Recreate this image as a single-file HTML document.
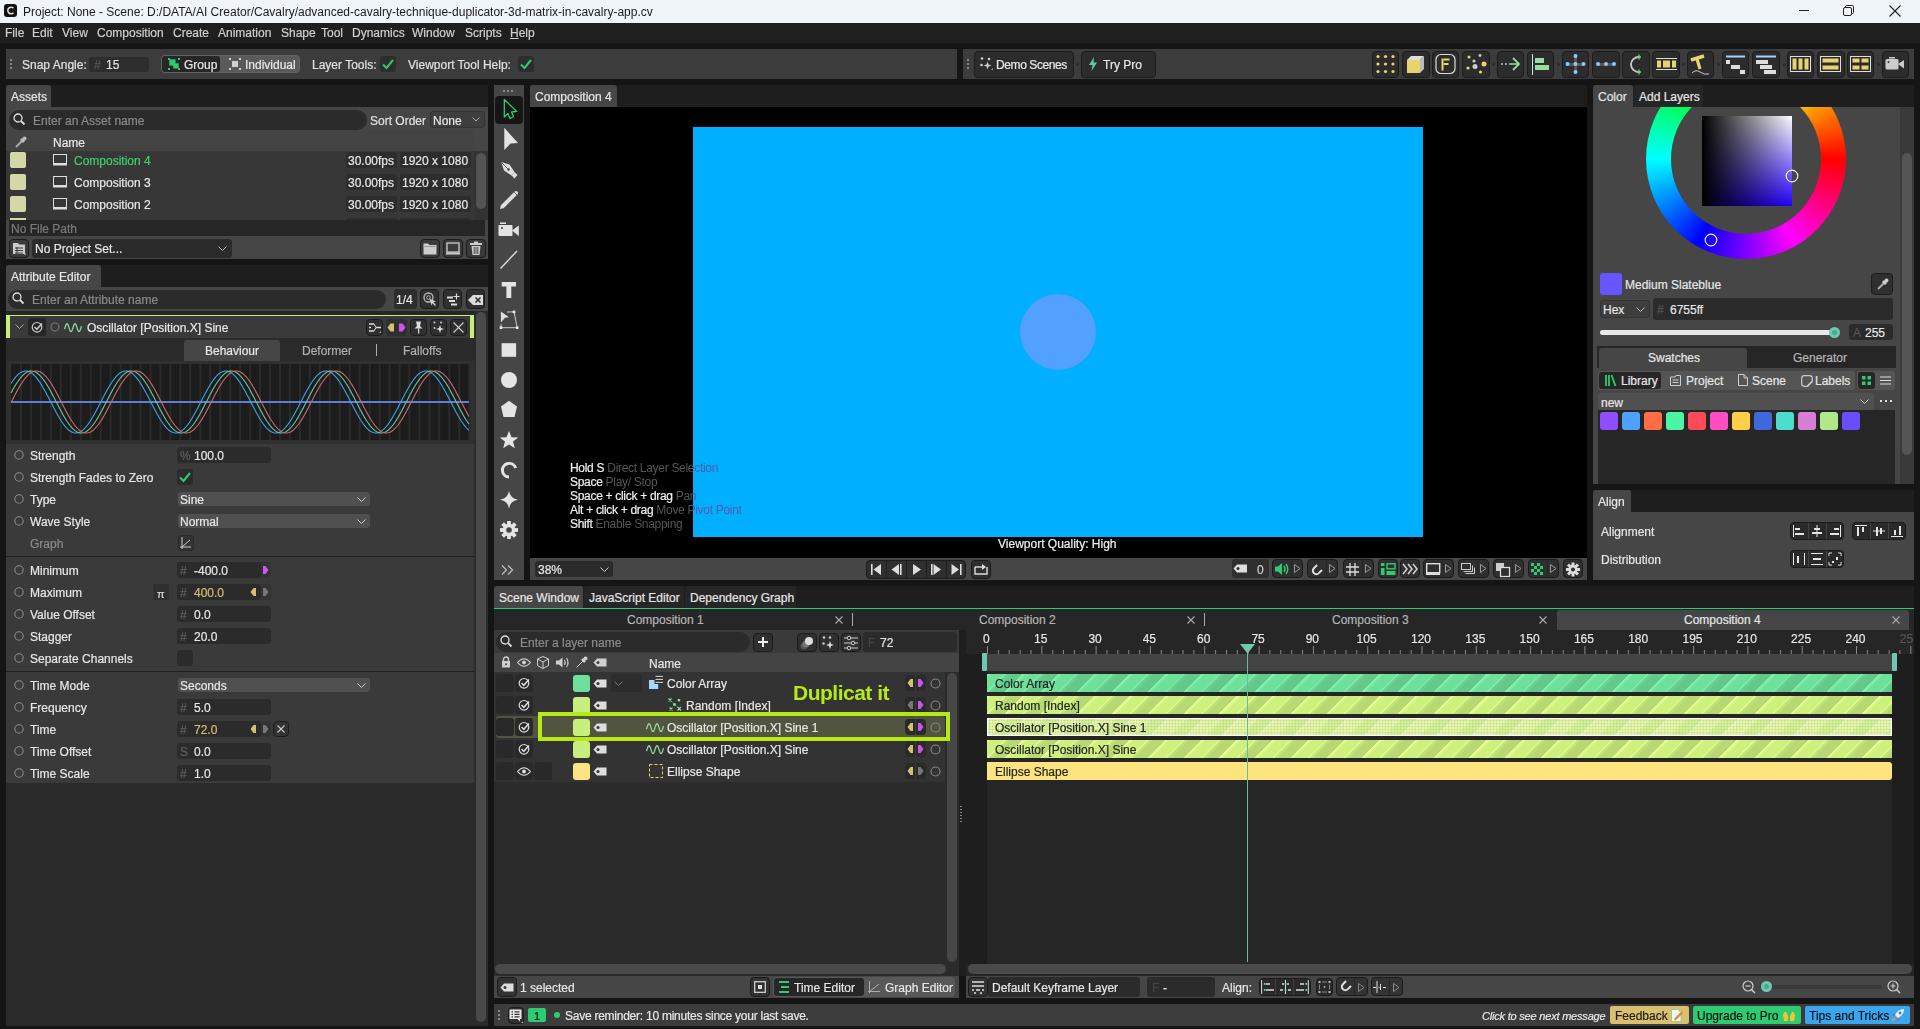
<!DOCTYPE html>
<html><head><meta charset="utf-8">
<style>
*{box-sizing:border-box;margin:0;padding:0}
html,body{width:1920px;height:1029px;overflow:hidden;background:#151515;font-family:"Liberation Sans",sans-serif;font-size:12px;color:#dcdcdc}
.a{position:absolute}
.t{position:absolute;white-space:nowrap;line-height:16px;margin-top:1px;-webkit-text-stroke:0.2px currentColor}
.tab{position:absolute;background:#464646;border-radius:3px 3px 0 0}
.fld{position:absolute;background:#2b2b2b;border-radius:3px}
.btn{position:absolute;background:#2c2c2c;border:1px solid #1c1c1c;border-radius:4px}
svg{position:absolute;overflow:visible}
</style></head><body>
<!-- title bar -->
<div class="a" style="left:0;top:0;width:1920px;height:23px;background:#eff4f9"></div>
<div class="a" style="left:4px;top:4px;width:13px;height:13px;background:#111;border-radius:3px"></div>
<svg style="left:4px;top:4px" width="13" height="13"><path d="M9.5 4.2 A3.3 3.3 0 1 0 9.5 8.8" stroke="#ddd" stroke-width="1.6" fill="none"/></svg>
<div class="t" style="left:23px;top:3px;color:#1b1b1b;-webkit-text-stroke:0">Project: None - Scene: D:/DATA/AI Creator/Cavalry/advanced-cavalry-technique-duplicator-3d-matrix-in-cavalry-app.cv</div>
<div class="a" style="left:1799px;top:10px;width:10px;height:1px;background:#222"></div>
<svg style="left:1843px;top:5px" width="12" height="12"><rect x="0.5" y="2.5" width="8" height="8" rx="1.5" fill="none" stroke="#222"/><path d="M2.5 2.5 V1.8 Q2.5 0.5 3.8 0.5 H9.5 Q10.5 0.5 10.5 1.5 V7.5 Q10.5 8.5 9.5 8.5 H8.5" fill="none" stroke="#222"/></svg>
<svg style="left:1889px;top:5px" width="12" height="12"><path d="M0.5 0.5 L11.5 11.5 M11.5 0.5 L0.5 11.5" stroke="#222" stroke-width="1.1"/></svg>
<!-- menu bar -->
<div class="a" style="left:0;top:23px;width:1920px;height:20px;background:#1f1f1f"></div>
<div class="t" style="left:5px;top:24px;color:#cfcfcf">File</div>
<div class="t" style="left:32px;top:24px;color:#cfcfcf">Edit</div>
<div class="t" style="left:62px;top:24px;color:#cfcfcf">View</div>
<div class="t" style="left:97px;top:24px;color:#cfcfcf">Composition</div>
<div class="t" style="left:173px;top:24px;color:#cfcfcf">Create</div>
<div class="t" style="left:218px;top:24px;color:#cfcfcf">Animation</div>
<div class="t" style="left:281px;top:24px;color:#cfcfcf">Shape</div>
<div class="t" style="left:321px;top:24px;color:#cfcfcf">Tool</div>
<div class="t" style="left:352px;top:24px;color:#cfcfcf">Dynamics</div>
<div class="t" style="left:412px;top:24px;color:#cfcfcf">Window</div>
<div class="t" style="left:465px;top:24px;color:#cfcfcf">Scripts</div>
<div class="t" style="left:510px;top:24px;color:#cfcfcf"><u>H</u>elp</div>
<!-- toolbar 1 -->
<div class="a" style="left:6px;top:49px;width:951px;height:30px;background:#3c3c3c"></div>
<div class="a" style="left:10px;top:59px;width:2px;height:2px;background:#888;box-shadow:0 4px #888,0 8px #888"></div>
<div class="t" style="left:22px;top:56px;color:#e0e0e0">Snap Angle:</div>
<div class="fld" style="left:89px;top:57px;width:60px;height:15px;background:#2d2d2d"></div>
<div class="t" style="left:94px;top:56px;color:#555">#</div>
<div class="t" style="left:106px;top:56px;color:#e0e0e0">15</div>
<div class="a" style="left:161px;top:55px;width:139px;height:18px;background:#5a5a5a;border:1px solid #646464;border-radius:4px"></div>
<div class="a" style="left:162px;top:56px;width:58px;height:16px;background:#262626;border-radius:3px"></div>
<svg style="left:168px;top:58px" width="12" height="12"><g fill="#2ecc71"><rect x="0" y="0" width="2" height="2"/><rect x="10" y="0" width="2" height="2"/><rect x="0" y="10" width="2" height="2"/><rect x="10" y="10" width="2" height="2"/><rect x="1.3" y="1.3" width="6.2" height="6.3"/><rect x="5.2" y="5.3" width="5.5" height="5.2"/></g></svg>
<div class="t" style="left:184px;top:56px;color:#e8e8e8">Group</div>
<svg style="left:229px;top:58px" width="12" height="12"><g fill="#cfcfcf"><rect x="0" y="0" width="2" height="2"/><rect x="10" y="0" width="2" height="2"/><rect x="0" y="10" width="2" height="2"/><rect x="10" y="10" width="2" height="2"/><rect x="3" y="3" width="6" height="6"/></g></svg>
<div class="t" style="left:245px;top:56px;color:#e8e8e8">Individual</div>
<div class="t" style="left:312px;top:56px;color:#e0e0e0">Layer Tools:</div>
<div class="fld" style="left:380px;top:56px;width:16px;height:16px;background:#2d2d2d"></div>
<svg style="left:382px;top:59px" width="12" height="10"><path d="M1 5.5 L4.5 9 L11 1" stroke="#2ecc71" stroke-width="2" fill="none"/></svg>
<div class="t" style="left:408px;top:56px;color:#e0e0e0">Viewport Tool Help:</div>
<div class="fld" style="left:518px;top:56px;width:16px;height:16px;background:#2d2d2d"></div>
<svg style="left:520px;top:59px" width="12" height="10"><path d="M1 5.5 L4.5 9 L11 1" stroke="#2ecc71" stroke-width="2" fill="none"/></svg>
<!-- toolbar 2 -->
<div class="a" style="left:963px;top:49px;width:951px;height:30px;background:#3c3c3c"></div>
<div class="a" style="left:967px;top:59px;width:2px;height:2px;background:#888;box-shadow:0 4px #888,0 8px #888"></div>
<div class="btn" style="left:974px;top:51px;width:100px;height:27px"></div>
<svg style="left:980px;top:57px" width="14" height="14"><g fill="#ccc"><circle cx="2" cy="1.5" r="1.3"/><circle cx="9" cy="2" r="1.3"/><circle cx="1.5" cy="8" r="1.3"/><path d="M7.5 4.5 L8.5 7.5 L11.5 8.5 L8.5 9.5 L7.5 12.5 L6.5 9.5 L3.5 8.5 L6.5 7.5Z"/></g><path d="M11 13 L13 11 L13 13Z" fill="#5fc9a8"/></svg>
<div class="t" style="left:996px;top:56px;color:#e8e8e8;letter-spacing:-0.4px">Demo Scenes</div>
<div class="a" style="left:1076px;top:63px;width:3px;height:3px;border-radius:2px;background:#2a2a2a"></div>
<div class="btn" style="left:1081px;top:51px;width:75px;height:27px"></div>
<svg style="left:1088px;top:57px" width="10" height="14"><path d="M6 0 L1 8 L4.5 8 L3.5 14 L9 5.5 L5.5 5.5Z" fill="#5fc9a8"/></svg>
<div class="t" style="left:1103px;top:56px;color:#e8e8e8">Try Pro</div>
<div class="btn" style="left:1372px;top:51px;width:27px;height:27px"></div>
<svg style="left:1372px;top:51px" width="27" height="27"><g fill="#e6d56f"><circle cx="6" cy="5.5" r="1.6"/><circle cx="13.5" cy="5.5" r="1.6"/><circle cx="21" cy="5.5" r="1.6"/><circle cx="6" cy="13" r="1.6"/><circle cx="13.5" cy="13" r="1.6"/><circle cx="21" cy="13" r="1.6"/><circle cx="6" cy="20.5" r="1.6"/><circle cx="13.5" cy="20.5" r="1.6"/><circle cx="21" cy="20.5" r="1.6"/></g></svg>
<div class="btn" style="left:1402px;top:51px;width:28px;height:27px"></div>
<svg style="left:1402px;top:51px" width="28" height="27"><path d="M5 9 L9 5 L22 5 L18 9Z" fill="#ddd"/><path d="M18 9 L22 5 L22 18 L18 22Z" fill="#bbb"/><rect x="5" y="9" width="13" height="13" fill="#e6d56f"/></svg>
<div class="btn" style="left:1432px;top:51px;width:27px;height:27px"></div>
<svg style="left:1432px;top:51px" width="27" height="27"><rect x="4" y="3.5" width="19" height="19" rx="5" fill="none" stroke="#ddd" stroke-width="1.2"/><g fill="#e6d56f"><rect x="9.5" y="7.5" width="2" height="12"/><rect x="11.5" y="7.5" width="6" height="2"/><rect x="11.5" y="12" width="5" height="2"/></g></svg>
<div class="btn" style="left:1462px;top:51px;width:28px;height:27px"></div>
<svg style="left:1462px;top:51px" width="28" height="27"><circle cx="7" cy="6" r="1.5" fill="#e6d56f"/><circle cx="18" cy="4.5" r="1.4" fill="#ccc"/><circle cx="12" cy="10" r="1.6" fill="#ccc"/><circle cx="22" cy="13" r="2.5" fill="#e6d56f"/><circle cx="6" cy="17" r="1.6" fill="#e6d56f"/><circle cx="13" cy="15.5" r="2.5" fill="#ccc"/><circle cx="18.5" cy="21" r="1.6" fill="#e6d56f"/></svg>
<div class="a" style="left:1492px;top:63px;width:3px;height:3px;border-radius:2px;background:#2a2a2a"></div>
<div class="btn" style="left:1497px;top:51px;width:27px;height:27px"></div>
<svg style="left:1497px;top:51px" width="27" height="27"><path d="M4 13 H6 M8 13 H10 M12 13 H21" stroke="#8fdf98" stroke-width="1.6"/><path d="M16 7 L22 13 L16 19" stroke="#8fdf98" stroke-width="1.8" fill="none"/></svg>
<div class="btn" style="left:1527px;top:51px;width:27px;height:27px"></div>
<svg style="left:1527px;top:51px" width="27" height="27"><rect x="5" y="3" width="1" height="21" fill="#ddd"/><rect x="8" y="7" width="9" height="5" fill="#9adc9f"/><rect x="8" y="14" width="14" height="5" fill="#9adc9f"/></svg>
<div class="a" style="left:1557px;top:63px;width:3px;height:3px;border-radius:2px;background:#2a2a2a"></div>
<div class="btn" style="left:1562px;top:51px;width:27px;height:27px"></div>
<svg style="left:1562px;top:51px" width="27" height="27"><rect x="6" y="12" width="15" height="3" fill="#555"/><rect x="12" y="5" width="3" height="17" fill="#555"/><g fill="#8cc8ff"><circle cx="13.5" cy="5" r="2"/><circle cx="13.5" cy="13" r="2"/><circle cx="13.5" cy="21" r="2"/><circle cx="5.5" cy="13" r="2"/><circle cx="21.5" cy="13" r="2"/></g></svg>
<div class="btn" style="left:1592px;top:51px;width:28px;height:27px"></div>
<svg style="left:1592px;top:51px" width="28" height="27"><rect x="6" y="12" width="16" height="3" fill="#555"/><g fill="#8cc8ff"><circle cx="6" cy="13" r="2"/><circle cx="14" cy="13" r="2"/><circle cx="22" cy="13" r="2"/></g></svg>
<div class="btn" style="left:1622px;top:51px;width:28px;height:27px"></div>
<svg style="left:1622px;top:51px" width="28" height="27"><path d="M17 6 A8 7.5 0 0 0 17 21" stroke="#ccc" stroke-width="1.8" fill="none"/><path d="M14.5 6 H19 M17 3.5 V8.5 M14.5 21 H19 M17 18.5 V23.5" stroke="#7fcf8a" stroke-width="1.3"/></svg>
<div class="btn" style="left:1652px;top:51px;width:28px;height:27px"></div>
<svg style="left:1652px;top:51px" width="28" height="27"><rect x="4" y="7" width="21" height="1" fill="#ddd"/><rect x="4" y="18" width="21" height="1" fill="#ddd"/><g fill="#e6d56f"><rect x="5" y="9.5" width="4" height="7"/><rect x="11" y="9.5" width="7" height="7"/><rect x="20" y="9.5" width="4" height="7"/></g></svg>
<div class="a" style="left:1682px;top:63px;width:3px;height:3px;border-radius:2px;background:#2a2a2a"></div>
<div class="btn" style="left:1687px;top:51px;width:27px;height:27px"></div>
<svg style="left:1687px;top:51px" width="27" height="27"><path d="M4 9 L17 5" stroke="#e6d56f" stroke-width="3.5"/><path d="M10 8 L13 18" stroke="#e6d56f" stroke-width="3.2"/><path d="M5 22 Q9 18 13 21 T22 23" stroke="#ccc" stroke-width="1" fill="none"/></svg>
<div class="a" style="left:1717px;top:63px;width:3px;height:3px;border-radius:2px;background:#2a2a2a"></div>
<div class="btn" style="left:1722px;top:51px;width:27px;height:27px"></div>
<svg style="left:1722px;top:51px" width="27" height="27"><rect x="4" y="4.5" width="19" height="2" fill="#9fd6ff"/><g fill="#ddd"><rect x="4" y="9" width="4" height="4"/><rect x="9" y="14" width="9" height="4"/><rect x="18" y="19" width="5" height="4"/></g></svg>
<div class="btn" style="left:1752px;top:51px;width:28px;height:27px"></div>
<svg style="left:1752px;top:51px" width="28" height="27"><rect x="4" y="4.5" width="20" height="2" fill="#9fd6ff"/><g fill="#ddd"><rect x="4" y="9" width="12" height="4"/><rect x="8" y="14" width="12" height="4"/><rect x="12" y="19" width="12" height="4"/></g></svg>
<div class="a" style="left:1783px;top:63px;width:3px;height:3px;border-radius:2px;background:#2a2a2a"></div>
<div class="btn" style="left:1787px;top:51px;width:27px;height:27px"></div>
<svg style="left:1787px;top:51px" width="27" height="27"><rect x="3.5" y="5.5" width="20" height="15" fill="none" stroke="#ddd"/><g fill="#e6d56f"><rect x="5.5" y="7.5" width="4" height="11"/><rect x="11.5" y="7.5" width="4" height="11"/><rect x="17.5" y="7.5" width="4" height="11"/></g></svg>
<div class="btn" style="left:1817px;top:51px;width:28px;height:27px"></div>
<svg style="left:1817px;top:51px" width="28" height="27"><rect x="3.5" y="5.5" width="20" height="15" fill="none" stroke="#ddd"/><g fill="#e6d56f"><rect x="5.5" y="7.5" width="16" height="4"/><rect x="5.5" y="14.5" width="16" height="4"/></g></svg>
<div class="btn" style="left:1847px;top:51px;width:27px;height:27px"></div>
<svg style="left:1847px;top:51px" width="27" height="27"><rect x="3.5" y="5.5" width="20" height="15" fill="none" stroke="#ddd"/><g fill="#e6d56f"><rect x="5.5" y="7.5" width="7" height="4"/><rect x="14.5" y="7.5" width="7" height="4"/><rect x="5.5" y="14.5" width="7" height="4"/><rect x="14.5" y="14.5" width="7" height="4"/></g></svg>
<div class="a" style="left:1877px;top:63px;width:3px;height:3px;border-radius:2px;background:#2a2a2a"></div>
<div class="btn" style="left:1882px;top:51px;width:27px;height:27px"></div>
<svg style="left:1882px;top:51px" width="27" height="27"><rect x="7" y="6" width="6" height="1.5" fill="#ccc"/><rect x="3.5" y="8" width="13" height="10.5" rx="1.5" fill="#ccc"/><path d="M16 13 L22 9 L22 17.5Z" fill="#ccc"/><circle cx="6.5" cy="11" r="1" fill="#333"/></svg>
<!-- assets panel -->
<div class="a" style="left:6px;top:85px;width:482px;height:22px;background:#1e1e1e"></div>
<div class="tab" style="left:6px;top:85px;width:45px;height:22px"></div>
<div class="t" style="left:11px;top:88px;color:#e6e6e6">Assets</div>
<div class="a" style="left:6px;top:107px;width:482px;height:152px;background:#464646"></div>
<div class="fld" style="left:9px;top:110px;width:358px;height:20px;border-radius:10px;background:#2b2b2b"></div>
<svg style="left:13px;top:113px" width="13" height="13"><circle cx="5" cy="5" r="4" stroke="#ddd" stroke-width="1.3" fill="none"/><path d="M8 8 L11.5 11.5" stroke="#ddd" stroke-width="1.8"/></svg>
<div class="t" style="left:33px;top:112px;color:#8a8a8a">Enter an Asset name</div>
<div class="t" style="left:370px;top:112px;color:#e0e0e0">Sort Order</div>
<div class="a" style="left:430px;top:111px;width:55px;height:17px;background:#3e3e3e;border:1px solid #333;border-radius:3px"></div>
<div class="t" style="left:433px;top:112px;color:#e6e6e6">None</div>
<svg style="left:472px;top:117px" width="8" height="5"><path d="M0.5 0.5 L4 4 L7.5 0.5" stroke="#aaa" fill="none"/></svg>
<div class="a" style="left:6px;top:130px;width:468px;height:21px;background:#444"></div>
<svg style="left:14px;top:136px" width="13" height="13"><path d="M2 11 L8 5" stroke="#aaa" stroke-width="2"/><path d="M7 3 L10 6" stroke="#bbb" stroke-width="3"/><circle cx="10.5" cy="2.5" r="2" fill="#bbb"/></svg>
<div class="t" style="left:53px;top:134px;color:#e6e6e6">Name</div>
<div class="a" style="left:6px;top:151px;width:468px;height:69px;background:#373737"></div>
<div class="a" style="left:474px;top:151px;width:14px;height:69px;background:#333"></div>
<div class="a" style="left:476px;top:153px;width:10px;height:56px;background:#545454;border-radius:5px"></div>
<!-- rows -->
<div class="a" style="left:10px;top:152px;width:16px;height:16px;background:#d3d8a6;border-radius:2px"></div>
<div class="a" style="left:10px;top:174px;width:16px;height:16px;background:#d3d8a6;border-radius:2px"></div>
<div class="a" style="left:10px;top:196px;width:16px;height:16px;background:#d3d8a6;border-radius:2px"></div>
<div class="a" style="left:10px;top:218px;width:16px;height:2px;background:#d3d8a6"></div>
<svg style="left:53px;top:154px" width="14" height="12"><rect x="0.5" y="0.5" width="13" height="9" fill="none" stroke="#ddd"/><rect x="0" y="9.5" width="14" height="2" fill="#ddd"/></svg>
<svg style="left:53px;top:176px" width="14" height="12"><rect x="0.5" y="0.5" width="13" height="9" fill="none" stroke="#ddd"/><rect x="0" y="9.5" width="14" height="2" fill="#ddd"/></svg>
<svg style="left:53px;top:198px" width="14" height="12"><rect x="0.5" y="0.5" width="13" height="9" fill="none" stroke="#ddd"/><rect x="0" y="9.5" width="14" height="2" fill="#ddd"/></svg>
<div class="t" style="left:74px;top:152px;color:#3dd26e">Composition 4</div>
<div class="t" style="left:74px;top:174px;color:#e6e6e6">Composition 3</div>
<div class="t" style="left:74px;top:196px;color:#e6e6e6">Composition 2</div>
<div class="fld" style="left:346px;top:152px;width:51px;height:16px;background:#2d2d2d"></div>
<div class="fld" style="left:400px;top:152px;width:71px;height:16px;background:#2d2d2d"></div>
<div class="fld" style="left:346px;top:174px;width:51px;height:16px;background:#2d2d2d"></div>
<div class="fld" style="left:400px;top:174px;width:71px;height:16px;background:#2d2d2d"></div>
<div class="fld" style="left:346px;top:196px;width:51px;height:16px;background:#2d2d2d"></div>
<div class="fld" style="left:400px;top:196px;width:71px;height:16px;background:#2d2d2d"></div>
<div class="fld" style="left:346px;top:218px;width:51px;height:2px;background:#2d2d2d"></div>
<div class="fld" style="left:400px;top:218px;width:71px;height:2px;background:#2d2d2d"></div>
<div class="t" style="left:348px;top:152px;color:#e6e6e6">30.00fps</div>
<div class="t" style="left:402px;top:152px;color:#e6e6e6">1920 x 1080</div>
<div class="t" style="left:348px;top:174px;color:#e6e6e6">30.00fps</div>
<div class="t" style="left:402px;top:174px;color:#e6e6e6">1920 x 1080</div>
<div class="t" style="left:348px;top:196px;color:#e6e6e6">30.00fps</div>
<div class="t" style="left:402px;top:196px;color:#e6e6e6">1920 x 1080</div>
<div class="a" style="left:9px;top:220px;width:476px;height:16px;background:#262626"></div>
<div class="t" style="left:11px;top:220px;color:#7a7a7a">No File Path</div>
<div class="btn" style="left:9px;top:239px;width:20px;height:19px;background:#3a3a3a"></div>
<svg style="left:12px;top:242px" width="14" height="13"><path d="M1 1 H6 L7 2.5 H13 V12 H1Z" fill="#ccc"/><g stroke="#3a3a3a" stroke-width="1"><path d="M3 6 H11 M3 8.5 H11 M3 11 H11 M5 5 V12"/></g><path d="M12 13 L14 11 V13Z" fill="#5fc9a8"/></svg>
<div class="fld" style="left:32px;top:239px;width:200px;height:19px;background:#2b2b2b"></div>
<div class="t" style="left:35px;top:240px;color:#e6e6e6">No Project Set...</div>
<svg style="left:218px;top:246px" width="9" height="5"><path d="M0.5 0.5 L4.5 4.5 L8.5 0.5" stroke="#bbb" fill="none"/></svg>
<div class="btn" style="left:420px;top:239px;width:20px;height:19px;background:#3a3a3a"></div>
<svg style="left:423px;top:242px" width="14" height="13"><path d="M0.5 1.5 H5 L6.5 3 H13.5 V12.5 H0.5Z" fill="#ccc"/><path d="M0.5 4.5 H13.5" stroke="#999"/></svg>
<div class="btn" style="left:443px;top:239px;width:20px;height:19px;background:#3a3a3a"></div>
<svg style="left:446px;top:242px" width="14" height="13"><rect x="1" y="1" width="12" height="9" fill="none" stroke="#ccc" stroke-width="1.3"/><rect x="0" y="10.5" width="14" height="2" fill="#ccc"/></svg>
<div class="btn" style="left:466px;top:239px;width:20px;height:19px;background:#3a3a3a"></div>
<svg style="left:469px;top:241px" width="14" height="15"><rect x="1" y="2" width="12" height="2" fill="#ccc"/><rect x="5" y="0.5" width="4" height="2" fill="#ccc"/><path d="M2.5 5 H11.5 L10.5 14 H3.5Z" fill="#ccc"/><path d="M5.2 6 V13 M7 6 V13 M8.8 6 V13" stroke="#3a3a3a" stroke-width="0.9"/></svg>
<div class="a" style="left:6px;top:265px;width:482px;height:22px;background:#1e1e1e"></div>
<div class="tab" style="left:6px;top:265px;width:95px;height:22px"></div>
<div class="t" style="left:11px;top:268px;color:#e6e6e6">Attribute Editor</div>
<div class="a" style="left:6px;top:287px;width:482px;height:739px;background:#2b2b2b"></div>
<div class="a" style="left:6px;top:287px;width:482px;height:25px;background:#464646"></div>
<div class="fld" style="left:8px;top:290px;width:378px;height:19px;border-radius:10px;background:#2b2b2b"></div>
<svg style="left:12px;top:292px" width="13" height="13"><circle cx="5" cy="5" r="4" stroke="#ddd" stroke-width="1.3" fill="none"/><path d="M8 8 L11.5 11.5" stroke="#ddd" stroke-width="1.8"/></svg>
<div class="t" style="left:32px;top:291px;color:#8a8a8a">Enter an Attribute name</div>
<div class="fld" style="left:394px;top:289px;width:23px;height:20px;background:#2d2d2d"></div>
<div class="t" style="left:396px;top:291px;color:#e6e6e6">1/4</div>
<div class="btn" style="left:420px;top:289px;width:19px;height:20px;background:#2f2f2f"></div>
<div class="btn" style="left:443px;top:289px;width:19px;height:20px;background:#2f2f2f"></div>
<div class="btn" style="left:466px;top:289px;width:19px;height:20px;background:#2f2f2f"></div>
<svg style="left:423px;top:292px" width="14" height="14"><circle cx="5.5" cy="5.5" r="4.5" stroke="#bbb" stroke-width="1.3" fill="none"/><circle cx="5.5" cy="5.5" r="1.8" stroke="#bbb" stroke-width="1" fill="none"/><path d="M6.5 6.5 L13 9.5 L10.5 10.3 L13 13 L12 14 L9.5 11.3 L8.5 13.5Z" fill="#ccc"/></svg>
<svg style="left:446px;top:293px" width="14" height="14"><path d="M1 4.5 H7 M3 8 H9 M5 11.5 H11" stroke="#ddd" stroke-width="2"/><path d="M10.5 0.5 V6.5 M7.5 3.5 H13.5" stroke="#ddd" stroke-width="1.2"/></svg>
<svg style="left:468px;top:294px" width="16" height="12"><path d="M5 1 H15 V11 H5 L0 6Z" fill="#ddd"/><path d="M7.5 3.5 L12.5 8.5 M12.5 3.5 L7.5 8.5" stroke="#2f2f2f" stroke-width="1.6"/></svg>
<div class="a" style="left:6px;top:311px;width:482px;height:4px;background:#262626"></div>
<div class="a" style="left:6px;top:315px;width:468px;height:23px;background:#3a3a3a"></div>
<div class="a" style="left:6px;top:315px;width:468px;height:1px;background:#c5ef79"></div>
<div class="a" style="left:6px;top:315px;width:4px;height:23px;background:#c5ef79"></div>
<div class="a" style="left:470px;top:315px;width:4px;height:23px;background:#c5ef79"></div>
<svg style="left:15px;top:324px" width="9" height="5"><path d="M0.5 0.5 L4.5 4.5 L8.5 0.5" stroke="#aaa" fill="none"/></svg>
<div class="fld" style="left:28px;top:318px;width:18px;height:18px;background:#262626"></div>
<svg style="left:31px;top:321px" width="12" height="12"><circle cx="6" cy="6.3" r="4.8" stroke="#ccc" stroke-width="1.2" fill="none"/><path d="M3.5 6 L5.8 8.3 L11 2.5" stroke="#ccc" stroke-width="1.5" fill="none"/></svg>
<svg style="left:50px;top:322px" width="10" height="10"><circle cx="5" cy="5" r="4" stroke="#777" stroke-width="1.1" fill="none"/></svg>
<svg style="left:64px;top:322px" width="18" height="12"><polyline points="0.50,7.16 0.75,6.42 1.00,5.65 1.25,4.88 1.50,4.14 1.75,3.46 2.00,2.86 2.25,2.37 2.50,2.00 2.75,1.78 3.00,1.70 3.25,1.78 3.50,2.00 3.75,2.37 4.00,2.86 4.25,3.46 4.50,4.14 4.75,4.88 5.00,5.65 5.25,6.42 5.50,7.16 5.75,7.84 6.00,8.44 6.25,8.93 6.50,9.30 6.75,9.52 7.00,9.60 7.25,9.52 7.50,9.30 7.75,8.93 8.00,8.44 8.25,7.84 8.50,7.16 8.75,6.42 9.00,5.65 9.25,4.88 9.50,4.14 9.75,3.46 10.00,2.86 10.25,2.37 10.50,2.00 10.75,1.78 11.00,1.70 11.25,1.78 11.50,2.00 11.75,2.37 12.00,2.86 12.25,3.46 12.50,4.14 12.75,4.88 13.00,5.65 13.25,6.42 13.50,7.16 13.75,7.84 14.00,8.44 14.25,8.93 14.50,9.30 14.75,9.52 15.00,9.60 15.25,9.52 15.50,9.30 15.75,8.93 16.00,8.44 16.25,7.84 16.50,7.16 16.75,6.42 17.00,5.65 17.25,4.88 17.50,4.14" stroke="#8fd89a" stroke-width="1.3" fill="none"/></svg>
<div class="t" style="left:87px;top:319px;color:#e6e6e6">Oscillator [Position.X] Sine</div>
<div class="btn" style="left:366px;top:319px;width:17px;height:17px;background:#2f2f2f"></div>
<div class="btn" style="left:410px;top:319px;width:17px;height:17px;background:#2f2f2f"></div>
<div class="btn" style="left:430px;top:319px;width:17px;height:17px;background:#2f2f2f"></div>
<div class="btn" style="left:450px;top:319px;width:17px;height:17px;background:#2f2f2f"></div>
<div class="fld" style="left:386px;top:319px;width:21px;height:17px;background:#2f2f2f"></div>
<svg style="left:369px;top:322px" width="12" height="11"><path d="M0 2 H5 M0 5.5 H2 M7 5.5 H12 M0 9 H5" stroke="#ddd" stroke-width="1.5"/><path d="M5 2 L7 5.5 L5 9" stroke="#ddd" fill="none"/><path d="M10 11 L12 9 V11Z" fill="#5fc9a8"/></svg>
<svg style="left:387px;top:323px" width="20" height="9"><path d="M7 0.5 V8.5 H3.5 L0.5 4.5 L3.5 0.5Z" fill="#d4bf72"/><path d="M12 0.5 V8.5 H15.5 L18.5 4.5 L15.5 0.5Z" fill="#d055ee"/></svg>
<svg style="left:413px;top:321px" width="11" height="13"><path d="M3 0.5 H8 L7 5 L9.5 7.5 H1.5 L4 5Z" fill="#ddd"/><rect x="5" y="7.5" width="1.2" height="5" fill="#ddd"/></svg>
<svg style="left:433px;top:321px" width="12" height="12"><g fill="#ccc"><circle cx="1.5" cy="1.5" r="1"/><circle cx="8" cy="1.5" r="1"/><circle cx="1.5" cy="7" r="1"/></g><path d="M7 4 L8 7 L11 8 L8 9 L7 12 L6 9 L3 8 L6 7Z" fill="#ddd"/></svg>
<svg style="left:453px;top:322px" width="11" height="11"><path d="M0.5 0.5 L10.5 10.5 M10.5 0.5 L0.5 10.5" stroke="#ccc" stroke-width="1.1"/></svg>
<div class="a" style="left:6px;top:338px;width:468px;height:23px;background:#2a2a2a"></div>
<div class="tab" style="left:184px;top:340px;width:96px;height:21px"></div>
<div class="t" style="left:205px;top:342px;color:#e6e6e6">Behaviour</div>
<div class="t" style="left:302px;top:342px;color:#b0b0b0">Deformer</div>
<div class="a" style="left:376px;top:344px;width:1px;height:12px;background:#aaa"></div>
<div class="t" style="left:403px;top:342px;color:#b0b0b0">Falloffs</div>
<div class="a" style="left:6px;top:361px;width:468px;height:83px;background:#303030"></div>
<div class="a" style="left:11px;top:364px;width:458px;height:76px;background:#1c1c1c"></div>
<svg style="left:11px;top:364px" width="458" height="76"><rect x="9.0" y="0" width="2" height="76" fill="#2a2a2a"/><rect x="19.0" y="0" width="2" height="76" fill="#2a2a2a"/><rect x="28.9" y="0" width="2" height="76" fill="#2a2a2a"/><rect x="38.9" y="0" width="2" height="76" fill="#2a2a2a"/><rect x="48.8" y="0" width="2" height="76" fill="#2a2a2a"/><rect x="58.8" y="0" width="2" height="76" fill="#2a2a2a"/><rect x="68.8" y="0" width="2" height="76" fill="#2a2a2a"/><rect x="78.7" y="0" width="2" height="76" fill="#2a2a2a"/><rect x="88.7" y="0" width="2" height="76" fill="#2a2a2a"/><rect x="98.6" y="0" width="2" height="76" fill="#2a2a2a"/><rect x="108.6" y="0" width="2" height="76" fill="#2a2a2a"/><rect x="118.6" y="0" width="2" height="76" fill="#2a2a2a"/><rect x="128.5" y="0" width="2" height="76" fill="#2a2a2a"/><rect x="138.5" y="0" width="2" height="76" fill="#2a2a2a"/><rect x="148.4" y="0" width="2" height="76" fill="#2a2a2a"/><rect x="158.4" y="0" width="2" height="76" fill="#2a2a2a"/><rect x="168.4" y="0" width="2" height="76" fill="#2a2a2a"/><rect x="178.3" y="0" width="2" height="76" fill="#2a2a2a"/><rect x="188.3" y="0" width="2" height="76" fill="#2a2a2a"/><rect x="198.2" y="0" width="2" height="76" fill="#2a2a2a"/><rect x="208.2" y="0" width="2" height="76" fill="#2a2a2a"/><rect x="218.2" y="0" width="2" height="76" fill="#2a2a2a"/><rect x="228.1" y="0" width="2" height="76" fill="#2a2a2a"/><rect x="238.1" y="0" width="2" height="76" fill="#2a2a2a"/><rect x="248.0" y="0" width="2" height="76" fill="#2a2a2a"/><rect x="258.0" y="0" width="2" height="76" fill="#2a2a2a"/><rect x="268.0" y="0" width="2" height="76" fill="#2a2a2a"/><rect x="277.9" y="0" width="2" height="76" fill="#2a2a2a"/><rect x="287.9" y="0" width="2" height="76" fill="#2a2a2a"/><rect x="297.8" y="0" width="2" height="76" fill="#2a2a2a"/><rect x="307.8" y="0" width="2" height="76" fill="#2a2a2a"/><rect x="317.8" y="0" width="2" height="76" fill="#2a2a2a"/><rect x="327.7" y="0" width="2" height="76" fill="#2a2a2a"/><rect x="337.7" y="0" width="2" height="76" fill="#2a2a2a"/><rect x="347.6" y="0" width="2" height="76" fill="#2a2a2a"/><rect x="357.6" y="0" width="2" height="76" fill="#2a2a2a"/><rect x="367.6" y="0" width="2" height="76" fill="#2a2a2a"/><rect x="377.5" y="0" width="2" height="76" fill="#2a2a2a"/><rect x="387.5" y="0" width="2" height="76" fill="#2a2a2a"/><rect x="397.4" y="0" width="2" height="76" fill="#2a2a2a"/><rect x="407.4" y="0" width="2" height="76" fill="#2a2a2a"/><rect x="417.4" y="0" width="2" height="76" fill="#2a2a2a"/><rect x="427.3" y="0" width="2" height="76" fill="#2a2a2a"/><rect x="437.3" y="0" width="2" height="76" fill="#2a2a2a"/><rect x="447.2" y="0" width="2" height="76" fill="#2a2a2a"/><rect x="457.2" y="0" width="2" height="76" fill="#2a2a2a"/>
<rect x="0" y="37" width="458" height="2" fill="#5f7fd6"/>
<polyline points="0,19.46 1,17.94 2,16.50 3,15.14 4,13.87 5,12.69 6,11.62 7,10.65 8,9.79 9,9.04 10,8.40 11,7.88 12,7.48 13,7.20 14,7.04 15,7.00 16,7.09 17,7.30 18,7.62 19,8.07 20,8.64 21,9.32 22,10.12 23,11.02 24,12.04 25,13.15 26,14.36 27,15.67 28,17.06 29,18.54 30,20.10 31,21.72 32,23.41 33,25.15 34,26.95 35,28.79 36,30.67 37,32.57 38,34.50 39,36.44 40,38.39 41,40.34 42,42.27 43,44.19 44,46.09 45,47.95 46,49.77 47,51.55 48,53.27 49,54.94 50,56.54 51,58.06 52,59.50 53,60.86 54,62.13 55,63.31 56,64.38 57,65.35 58,66.21 59,66.96 60,67.60 61,68.12 62,68.52 63,68.80 64,68.96 65,69.00 66,68.91 67,68.70 68,68.38 69,67.93 70,67.36 71,66.68 72,65.88 73,64.98 74,63.96 75,62.85 76,61.64 77,60.33 78,58.94 79,57.46 80,55.90 81,54.28 82,52.59 83,50.85 84,49.05 85,47.21 86,45.33 87,43.43 88,41.50 89,39.56 90,37.61 91,35.66 92,33.73 93,31.81 94,29.91 95,28.05 96,26.23 97,24.45 98,22.73 99,21.06 100,19.46 101,17.94 102,16.50 103,15.14 104,13.87 105,12.69 106,11.62 107,10.65 108,9.79 109,9.04 110,8.40 111,7.88 112,7.48 113,7.20 114,7.04 115,7.00 116,7.09 117,7.30 118,7.62 119,8.07 120,8.64 121,9.32 122,10.12 123,11.02 124,12.04 125,13.15 126,14.36 127,15.67 128,17.06 129,18.54 130,20.10 131,21.72 132,23.41 133,25.15 134,26.95 135,28.79 136,30.67 137,32.57 138,34.50 139,36.44 140,38.39 141,40.34 142,42.27 143,44.19 144,46.09 145,47.95 146,49.77 147,51.55 148,53.27 149,54.94 150,56.54 151,58.06 152,59.50 153,60.86 154,62.13 155,63.31 156,64.38 157,65.35 158,66.21 159,66.96 160,67.60 161,68.12 162,68.52 163,68.80 164,68.96 165,69.00 166,68.91 167,68.70 168,68.38 169,67.93 170,67.36 171,66.68 172,65.88 173,64.98 174,63.96 175,62.85 176,61.64 177,60.33 178,58.94 179,57.46 180,55.90 181,54.28 182,52.59 183,50.85 184,49.05 185,47.21 186,45.33 187,43.43 188,41.50 189,39.56 190,37.61 191,35.66 192,33.73 193,31.81 194,29.91 195,28.05 196,26.23 197,24.45 198,22.73 199,21.06 200,19.46 201,17.94 202,16.50 203,15.14 204,13.87 205,12.69 206,11.62 207,10.65 208,9.79 209,9.04 210,8.40 211,7.88 212,7.48 213,7.20 214,7.04 215,7.00 216,7.09 217,7.30 218,7.62 219,8.07 220,8.64 221,9.32 222,10.12 223,11.02 224,12.04 225,13.15 226,14.36 227,15.67 228,17.06 229,18.54 230,20.10 231,21.72 232,23.41 233,25.15 234,26.95 235,28.79 236,30.67 237,32.57 238,34.50 239,36.44 240,38.39 241,40.34 242,42.27 243,44.19 244,46.09 245,47.95 246,49.77 247,51.55 248,53.27 249,54.94 250,56.54 251,58.06 252,59.50 253,60.86 254,62.13 255,63.31 256,64.38 257,65.35 258,66.21 259,66.96 260,67.60 261,68.12 262,68.52 263,68.80 264,68.96 265,69.00 266,68.91 267,68.70 268,68.38 269,67.93 270,67.36 271,66.68 272,65.88 273,64.98 274,63.96 275,62.85 276,61.64 277,60.33 278,58.94 279,57.46 280,55.90 281,54.28 282,52.59 283,50.85 284,49.05 285,47.21 286,45.33 287,43.43 288,41.50 289,39.56 290,37.61 291,35.66 292,33.73 293,31.81 294,29.91 295,28.05 296,26.23 297,24.45 298,22.73 299,21.06 300,19.46 301,17.94 302,16.50 303,15.14 304,13.87 305,12.69 306,11.62 307,10.65 308,9.79 309,9.04 310,8.40 311,7.88 312,7.48 313,7.20 314,7.04 315,7.00 316,7.09 317,7.30 318,7.62 319,8.07 320,8.64 321,9.32 322,10.12 323,11.02 324,12.04 325,13.15 326,14.36 327,15.67 328,17.06 329,18.54 330,20.10 331,21.72 332,23.41 333,25.15 334,26.95 335,28.79 336,30.67 337,32.57 338,34.50 339,36.44 340,38.39 341,40.34 342,42.27 343,44.19 344,46.09 345,47.95 346,49.77 347,51.55 348,53.27 349,54.94 350,56.54 351,58.06 352,59.50 353,60.86 354,62.13 355,63.31 356,64.38 357,65.35 358,66.21 359,66.96 360,67.60 361,68.12 362,68.52 363,68.80 364,68.96 365,69.00 366,68.91 367,68.70 368,68.38 369,67.93 370,67.36 371,66.68 372,65.88 373,64.98 374,63.96 375,62.85 376,61.64 377,60.33 378,58.94 379,57.46 380,55.90 381,54.28 382,52.59 383,50.85 384,49.05 385,47.21 386,45.33 387,43.43 388,41.50 389,39.56 390,37.61 391,35.66 392,33.73 393,31.81 394,29.91 395,28.05 396,26.23 397,24.45 398,22.73 399,21.06 400,19.46 401,17.94 402,16.50 403,15.14 404,13.87 405,12.69 406,11.62 407,10.65 408,9.79 409,9.04 410,8.40 411,7.88 412,7.48 413,7.20 414,7.04 415,7.00 416,7.09 417,7.30 418,7.62 419,8.07 420,8.64 421,9.32 422,10.12 423,11.02 424,12.04 425,13.15 426,14.36 427,15.67 428,17.06 429,18.54 430,20.10 431,21.72 432,23.41 433,25.15 434,26.95 435,28.79 436,30.67 437,32.57 438,34.50 439,36.44 440,38.39 441,40.34 442,42.27 443,44.19 444,46.09 445,47.95 446,49.77 447,51.55 448,53.27 449,54.94 450,56.54 451,58.06 452,59.50 453,60.86 454,62.13 455,63.31 456,64.38 457,65.35 458,66.21" stroke="#3aa6e6" stroke-width="1.1" fill="none"/>
<polyline points="0,28.98 1,27.13 2,25.33 3,23.58 4,21.89 5,20.25 6,18.69 7,17.21 8,15.81 9,14.49 10,13.27 11,12.14 12,11.12 13,10.20 14,9.40 15,8.70 16,8.12 17,7.66 18,7.32 19,7.10 20,7.01 21,7.03 22,7.18 23,7.45 24,7.83 25,8.34 26,8.97 27,9.71 28,10.56 29,11.52 30,12.58 31,13.75 32,15.01 33,16.36 34,17.79 35,19.31 36,20.90 37,22.56 38,24.27 39,26.05 40,27.87 41,29.73 42,31.62 43,33.54 44,35.47 45,37.42 46,39.36 47,41.30 48,43.23 49,45.14 50,47.02 51,48.87 52,50.67 53,52.42 54,54.11 55,55.75 56,57.31 57,58.79 58,60.19 59,61.51 60,62.73 61,63.86 62,64.88 63,65.80 64,66.60 65,67.30 66,67.88 67,68.34 68,68.68 69,68.90 70,68.99 71,68.97 72,68.82 73,68.55 74,68.17 75,67.66 76,67.03 77,66.29 78,65.44 79,64.48 80,63.42 81,62.25 82,60.99 83,59.64 84,58.21 85,56.69 86,55.10 87,53.44 88,51.73 89,49.95 90,48.13 91,46.27 92,44.38 93,42.46 94,40.53 95,38.58 96,36.64 97,34.70 98,32.77 99,30.86 100,28.98 101,27.13 102,25.33 103,23.58 104,21.89 105,20.25 106,18.69 107,17.21 108,15.81 109,14.49 110,13.27 111,12.14 112,11.12 113,10.20 114,9.40 115,8.70 116,8.12 117,7.66 118,7.32 119,7.10 120,7.01 121,7.03 122,7.18 123,7.45 124,7.83 125,8.34 126,8.97 127,9.71 128,10.56 129,11.52 130,12.58 131,13.75 132,15.01 133,16.36 134,17.79 135,19.31 136,20.90 137,22.56 138,24.27 139,26.05 140,27.87 141,29.73 142,31.62 143,33.54 144,35.47 145,37.42 146,39.36 147,41.30 148,43.23 149,45.14 150,47.02 151,48.87 152,50.67 153,52.42 154,54.11 155,55.75 156,57.31 157,58.79 158,60.19 159,61.51 160,62.73 161,63.86 162,64.88 163,65.80 164,66.60 165,67.30 166,67.88 167,68.34 168,68.68 169,68.90 170,68.99 171,68.97 172,68.82 173,68.55 174,68.17 175,67.66 176,67.03 177,66.29 178,65.44 179,64.48 180,63.42 181,62.25 182,60.99 183,59.64 184,58.21 185,56.69 186,55.10 187,53.44 188,51.73 189,49.95 190,48.13 191,46.27 192,44.38 193,42.46 194,40.53 195,38.58 196,36.64 197,34.70 198,32.77 199,30.86 200,28.98 201,27.13 202,25.33 203,23.58 204,21.89 205,20.25 206,18.69 207,17.21 208,15.81 209,14.49 210,13.27 211,12.14 212,11.12 213,10.20 214,9.40 215,8.70 216,8.12 217,7.66 218,7.32 219,7.10 220,7.01 221,7.03 222,7.18 223,7.45 224,7.83 225,8.34 226,8.97 227,9.71 228,10.56 229,11.52 230,12.58 231,13.75 232,15.01 233,16.36 234,17.79 235,19.31 236,20.90 237,22.56 238,24.27 239,26.05 240,27.87 241,29.73 242,31.62 243,33.54 244,35.47 245,37.42 246,39.36 247,41.30 248,43.23 249,45.14 250,47.02 251,48.87 252,50.67 253,52.42 254,54.11 255,55.75 256,57.31 257,58.79 258,60.19 259,61.51 260,62.73 261,63.86 262,64.88 263,65.80 264,66.60 265,67.30 266,67.88 267,68.34 268,68.68 269,68.90 270,68.99 271,68.97 272,68.82 273,68.55 274,68.17 275,67.66 276,67.03 277,66.29 278,65.44 279,64.48 280,63.42 281,62.25 282,60.99 283,59.64 284,58.21 285,56.69 286,55.10 287,53.44 288,51.73 289,49.95 290,48.13 291,46.27 292,44.38 293,42.46 294,40.53 295,38.58 296,36.64 297,34.70 298,32.77 299,30.86 300,28.98 301,27.13 302,25.33 303,23.58 304,21.89 305,20.25 306,18.69 307,17.21 308,15.81 309,14.49 310,13.27 311,12.14 312,11.12 313,10.20 314,9.40 315,8.70 316,8.12 317,7.66 318,7.32 319,7.10 320,7.01 321,7.03 322,7.18 323,7.45 324,7.83 325,8.34 326,8.97 327,9.71 328,10.56 329,11.52 330,12.58 331,13.75 332,15.01 333,16.36 334,17.79 335,19.31 336,20.90 337,22.56 338,24.27 339,26.05 340,27.87 341,29.73 342,31.62 343,33.54 344,35.47 345,37.42 346,39.36 347,41.30 348,43.23 349,45.14 350,47.02 351,48.87 352,50.67 353,52.42 354,54.11 355,55.75 356,57.31 357,58.79 358,60.19 359,61.51 360,62.73 361,63.86 362,64.88 363,65.80 364,66.60 365,67.30 366,67.88 367,68.34 368,68.68 369,68.90 370,68.99 371,68.97 372,68.82 373,68.55 374,68.17 375,67.66 376,67.03 377,66.29 378,65.44 379,64.48 380,63.42 381,62.25 382,60.99 383,59.64 384,58.21 385,56.69 386,55.10 387,53.44 388,51.73 389,49.95 390,48.13 391,46.27 392,44.38 393,42.46 394,40.53 395,38.58 396,36.64 397,34.70 398,32.77 399,30.86 400,28.98 401,27.13 402,25.33 403,23.58 404,21.89 405,20.25 406,18.69 407,17.21 408,15.81 409,14.49 410,13.27 411,12.14 412,11.12 413,10.20 414,9.40 415,8.70 416,8.12 417,7.66 418,7.32 419,7.10 420,7.01 421,7.03 422,7.18 423,7.45 424,7.83 425,8.34 426,8.97 427,9.71 428,10.56 429,11.52 430,12.58 431,13.75 432,15.01 433,16.36 434,17.79 435,19.31 436,20.90 437,22.56 438,24.27 439,26.05 440,27.87 441,29.73 442,31.62 443,33.54 444,35.47 445,37.42 446,39.36 447,41.30 448,43.23 449,45.14 450,47.02 451,48.87 452,50.67 453,52.42 454,54.11 455,55.75 456,57.31 457,58.79 458,60.19" stroke="#6fc2a0" stroke-width="1.1" fill="none"/>
<polyline points="0,38.58 1,36.64 2,34.70 3,32.77 4,30.86 5,28.98 6,27.13 7,25.33 8,23.58 9,21.89 10,20.25 11,18.69 12,17.21 13,15.81 14,14.49 15,13.27 16,12.14 17,11.12 18,10.20 19,9.40 20,8.70 21,8.12 22,7.66 23,7.32 24,7.10 25,7.01 26,7.03 27,7.18 28,7.45 29,7.83 30,8.34 31,8.97 32,9.71 33,10.56 34,11.52 35,12.58 36,13.75 37,15.01 38,16.36 39,17.79 40,19.31 41,20.90 42,22.56 43,24.27 44,26.05 45,27.87 46,29.73 47,31.62 48,33.54 49,35.47 50,37.42 51,39.36 52,41.30 53,43.23 54,45.14 55,47.02 56,48.87 57,50.67 58,52.42 59,54.11 60,55.75 61,57.31 62,58.79 63,60.19 64,61.51 65,62.73 66,63.86 67,64.88 68,65.80 69,66.60 70,67.30 71,67.88 72,68.34 73,68.68 74,68.90 75,68.99 76,68.97 77,68.82 78,68.55 79,68.17 80,67.66 81,67.03 82,66.29 83,65.44 84,64.48 85,63.42 86,62.25 87,60.99 88,59.64 89,58.21 90,56.69 91,55.10 92,53.44 93,51.73 94,49.95 95,48.13 96,46.27 97,44.38 98,42.46 99,40.53 100,38.58 101,36.64 102,34.70 103,32.77 104,30.86 105,28.98 106,27.13 107,25.33 108,23.58 109,21.89 110,20.25 111,18.69 112,17.21 113,15.81 114,14.49 115,13.27 116,12.14 117,11.12 118,10.20 119,9.40 120,8.70 121,8.12 122,7.66 123,7.32 124,7.10 125,7.01 126,7.03 127,7.18 128,7.45 129,7.83 130,8.34 131,8.97 132,9.71 133,10.56 134,11.52 135,12.58 136,13.75 137,15.01 138,16.36 139,17.79 140,19.31 141,20.90 142,22.56 143,24.27 144,26.05 145,27.87 146,29.73 147,31.62 148,33.54 149,35.47 150,37.42 151,39.36 152,41.30 153,43.23 154,45.14 155,47.02 156,48.87 157,50.67 158,52.42 159,54.11 160,55.75 161,57.31 162,58.79 163,60.19 164,61.51 165,62.73 166,63.86 167,64.88 168,65.80 169,66.60 170,67.30 171,67.88 172,68.34 173,68.68 174,68.90 175,68.99 176,68.97 177,68.82 178,68.55 179,68.17 180,67.66 181,67.03 182,66.29 183,65.44 184,64.48 185,63.42 186,62.25 187,60.99 188,59.64 189,58.21 190,56.69 191,55.10 192,53.44 193,51.73 194,49.95 195,48.13 196,46.27 197,44.38 198,42.46 199,40.53 200,38.58 201,36.64 202,34.70 203,32.77 204,30.86 205,28.98 206,27.13 207,25.33 208,23.58 209,21.89 210,20.25 211,18.69 212,17.21 213,15.81 214,14.49 215,13.27 216,12.14 217,11.12 218,10.20 219,9.40 220,8.70 221,8.12 222,7.66 223,7.32 224,7.10 225,7.01 226,7.03 227,7.18 228,7.45 229,7.83 230,8.34 231,8.97 232,9.71 233,10.56 234,11.52 235,12.58 236,13.75 237,15.01 238,16.36 239,17.79 240,19.31 241,20.90 242,22.56 243,24.27 244,26.05 245,27.87 246,29.73 247,31.62 248,33.54 249,35.47 250,37.42 251,39.36 252,41.30 253,43.23 254,45.14 255,47.02 256,48.87 257,50.67 258,52.42 259,54.11 260,55.75 261,57.31 262,58.79 263,60.19 264,61.51 265,62.73 266,63.86 267,64.88 268,65.80 269,66.60 270,67.30 271,67.88 272,68.34 273,68.68 274,68.90 275,68.99 276,68.97 277,68.82 278,68.55 279,68.17 280,67.66 281,67.03 282,66.29 283,65.44 284,64.48 285,63.42 286,62.25 287,60.99 288,59.64 289,58.21 290,56.69 291,55.10 292,53.44 293,51.73 294,49.95 295,48.13 296,46.27 297,44.38 298,42.46 299,40.53 300,38.58 301,36.64 302,34.70 303,32.77 304,30.86 305,28.98 306,27.13 307,25.33 308,23.58 309,21.89 310,20.25 311,18.69 312,17.21 313,15.81 314,14.49 315,13.27 316,12.14 317,11.12 318,10.20 319,9.40 320,8.70 321,8.12 322,7.66 323,7.32 324,7.10 325,7.01 326,7.03 327,7.18 328,7.45 329,7.83 330,8.34 331,8.97 332,9.71 333,10.56 334,11.52 335,12.58 336,13.75 337,15.01 338,16.36 339,17.79 340,19.31 341,20.90 342,22.56 343,24.27 344,26.05 345,27.87 346,29.73 347,31.62 348,33.54 349,35.47 350,37.42 351,39.36 352,41.30 353,43.23 354,45.14 355,47.02 356,48.87 357,50.67 358,52.42 359,54.11 360,55.75 361,57.31 362,58.79 363,60.19 364,61.51 365,62.73 366,63.86 367,64.88 368,65.80 369,66.60 370,67.30 371,67.88 372,68.34 373,68.68 374,68.90 375,68.99 376,68.97 377,68.82 378,68.55 379,68.17 380,67.66 381,67.03 382,66.29 383,65.44 384,64.48 385,63.42 386,62.25 387,60.99 388,59.64 389,58.21 390,56.69 391,55.10 392,53.44 393,51.73 394,49.95 395,48.13 396,46.27 397,44.38 398,42.46 399,40.53 400,38.58 401,36.64 402,34.70 403,32.77 404,30.86 405,28.98 406,27.13 407,25.33 408,23.58 409,21.89 410,20.25 411,18.69 412,17.21 413,15.81 414,14.49 415,13.27 416,12.14 417,11.12 418,10.20 419,9.40 420,8.70 421,8.12 422,7.66 423,7.32 424,7.10 425,7.01 426,7.03 427,7.18 428,7.45 429,7.83 430,8.34 431,8.97 432,9.71 433,10.56 434,11.52 435,12.58 436,13.75 437,15.01 438,16.36 439,17.79 440,19.31 441,20.90 442,22.56 443,24.27 444,26.05 445,27.87 446,29.73 447,31.62 448,33.54 449,35.47 450,37.42 451,39.36 452,41.30 453,43.23 454,45.14 455,47.02 456,48.87 457,50.67 458,52.42" stroke="#c96a6a" stroke-width="1.1" fill="none"/>
</svg>
<div class="a" style="left:6px;top:444px;width:468px;height:339px;background:#3a3a3a"></div>
<svg style="left:14px;top:450px" width="10" height="10"><circle cx="5" cy="5" r="4.2" stroke="#8a8a8a" stroke-width="1.1" fill="none"/></svg>
<div class="t" style="left:30px;top:447px;color:#e6e6e6">Strength</div>
<div class="fld" style="left:177px;top:447px;width:94px;height:16px;background:#2b2b2b"></div>
<div class="t" style="left:180px;top:447px;color:#5e5e5e">%</div>
<div class="t" style="left:194px;top:447px;color:#e6e6e6">100.0</div>
<svg style="left:14px;top:472px" width="10" height="10"><circle cx="5" cy="5" r="4.2" stroke="#8a8a8a" stroke-width="1.1" fill="none"/></svg>
<div class="t" style="left:30px;top:469px;color:#e6e6e6">Strength Fades to Zero</div>
<div class="fld" style="left:177px;top:469px;width:16px;height:16px;background:#2b2b2b"></div>
<svg style="left:179px;top:472px" width="12" height="10"><path d="M1 5.5 L4.5 9 L11 1" stroke="#2ecc71" stroke-width="2" fill="none"/></svg>
<svg style="left:14px;top:494px" width="10" height="10"><circle cx="5" cy="5" r="4.2" stroke="#8a8a8a" stroke-width="1.1" fill="none"/></svg>
<div class="t" style="left:30px;top:491px;color:#e6e6e6">Type</div>
<div class="fld" style="left:178px;top:492px;width:192px;height:14px;background:#505050"></div>
<div class="t" style="left:180px;top:491px;color:#e6e6e6">Sine</div>
<svg style="left:357px;top:497px" width="9" height="5"><path d="M0.5 0.5 L4.5 4.5 L8.5 0.5" stroke="#ccc" fill="none"/></svg>
<svg style="left:14px;top:516px" width="10" height="10"><circle cx="5" cy="5" r="4.2" stroke="#8a8a8a" stroke-width="1.1" fill="none"/></svg>
<div class="t" style="left:30px;top:513px;color:#e6e6e6">Wave Style</div>
<div class="fld" style="left:178px;top:514px;width:192px;height:14px;background:#505050"></div>
<div class="t" style="left:180px;top:513px;color:#e6e6e6">Normal</div>
<svg style="left:357px;top:519px" width="9" height="5"><path d="M0.5 0.5 L4.5 4.5 L8.5 0.5" stroke="#ccc" fill="none"/></svg>
<div class="t" style="left:30px;top:535px;color:#8a8a8a">Graph</div>
<div class="fld" style="left:178px;top:535px;width:16px;height:16px;background:#333;border:1px solid #2a2a2a"></div>
<svg style="left:180px;top:537px" width="12" height="12"><path d="M2 0 V12 M0 10 H11 M2 10 L10 3" stroke="#ccc" stroke-width="1"/></svg>
<div class="a" style="left:6px;top:556px;width:468px;height:1px;background:#1f1f1f"></div>
<svg style="left:14px;top:565px" width="10" height="10"><circle cx="5" cy="5" r="4.2" stroke="#8a8a8a" stroke-width="1.1" fill="none"/></svg>
<div class="t" style="left:30px;top:562px;color:#e6e6e6">Minimum</div>
<div class="fld" style="left:177px;top:562px;width:84px;height:16px;background:#2b2b2b"></div>
<div class="t" style="left:180px;top:562px;color:#5e5e5e">#</div>
<div class="t" style="left:194px;top:562px;color:#e6e6e6">-400.0</div>
<div class="a" style="left:261px;top:562px;width:10px;height:16px;background:#333;border-radius:0 3px 3px 0"></div>
<svg style="left:263px;top:566px" width="6" height="8"><path d="M0 0 H2.5 L5.5 4 L2.5 8 H0Z" fill="#cc55ee"/></svg>
<svg style="left:14px;top:587px" width="10" height="10"><circle cx="5" cy="5" r="4.2" stroke="#8a8a8a" stroke-width="1.1" fill="none"/></svg>
<div class="t" style="left:30px;top:584px;color:#e6e6e6">Maximum</div>
<div class="fld" style="left:177px;top:584px;width:84px;height:16px;background:#2b2b2b"></div>
<div class="t" style="left:180px;top:584px;color:#5e5e5e">#</div>
<div class="t" style="left:194px;top:584px;color:#d4bf72">400.0</div>
<div class="a" style="left:261px;top:584px;width:10px;height:16px;background:#333;border-radius:0 3px 3px 0"></div>
<svg style="left:250px;top:588px" width="6" height="8"><path d="M6 0 H3.5 L0.5 4 L3.5 8 H6Z" fill="#d4bf72"/></svg>
<svg style="left:263px;top:588px" width="6" height="8"><path d="M0 0 H2.5 L5.5 4 L2.5 8 H0Z" fill="#777"/></svg>
<div class="fld" style="left:153px;top:584px;width:16px;height:16px;background:#2f2f2f"></div>
<div class="t" style="left:157px;top:585px;color:#ddd;font-size:11px">π</div>
<svg style="left:14px;top:609px" width="10" height="10"><circle cx="5" cy="5" r="4.2" stroke="#8a8a8a" stroke-width="1.1" fill="none"/></svg>
<div class="t" style="left:30px;top:606px;color:#e6e6e6">Value Offset</div>
<div class="fld" style="left:177px;top:606px;width:94px;height:16px;background:#2b2b2b"></div>
<div class="t" style="left:180px;top:606px;color:#5e5e5e">#</div>
<div class="t" style="left:194px;top:606px;color:#e6e6e6">0.0</div>
<svg style="left:14px;top:631px" width="10" height="10"><circle cx="5" cy="5" r="4.2" stroke="#8a8a8a" stroke-width="1.1" fill="none"/></svg>
<div class="t" style="left:30px;top:628px;color:#e6e6e6">Stagger</div>
<div class="fld" style="left:177px;top:628px;width:94px;height:16px;background:#2b2b2b"></div>
<div class="t" style="left:180px;top:628px;color:#5e5e5e">#</div>
<div class="t" style="left:194px;top:628px;color:#e6e6e6">20.0</div>
<svg style="left:14px;top:653px" width="10" height="10"><circle cx="5" cy="5" r="4.2" stroke="#8a8a8a" stroke-width="1.1" fill="none"/></svg>
<div class="t" style="left:30px;top:650px;color:#e6e6e6">Separate Channels</div>
<div class="fld" style="left:177px;top:650px;width:16px;height:16px;background:#2b2b2b"></div>
<div class="a" style="left:6px;top:671px;width:468px;height:1px;background:#1f1f1f"></div>
<svg style="left:14px;top:680px" width="10" height="10"><circle cx="5" cy="5" r="4.2" stroke="#8a8a8a" stroke-width="1.1" fill="none"/></svg>
<div class="t" style="left:30px;top:677px;color:#e6e6e6">Time Mode</div>
<div class="fld" style="left:178px;top:678px;width:192px;height:14px;background:#505050"></div>
<div class="t" style="left:180px;top:677px;color:#e6e6e6">Seconds</div>
<svg style="left:357px;top:683px" width="9" height="5"><path d="M0.5 0.5 L4.5 4.5 L8.5 0.5" stroke="#ccc" fill="none"/></svg>
<svg style="left:14px;top:702px" width="10" height="10"><circle cx="5" cy="5" r="4.2" stroke="#8a8a8a" stroke-width="1.1" fill="none"/></svg>
<div class="t" style="left:30px;top:699px;color:#e6e6e6">Frequency</div>
<div class="fld" style="left:177px;top:699px;width:94px;height:16px;background:#2b2b2b"></div>
<div class="t" style="left:180px;top:699px;color:#5e5e5e">#</div>
<div class="t" style="left:194px;top:699px;color:#e6e6e6">5.0</div>
<svg style="left:14px;top:724px" width="10" height="10"><circle cx="5" cy="5" r="4.2" stroke="#8a8a8a" stroke-width="1.1" fill="none"/></svg>
<div class="t" style="left:30px;top:721px;color:#e6e6e6">Time</div>
<div class="fld" style="left:177px;top:721px;width:84px;height:16px;background:#2b2b2b"></div>
<div class="t" style="left:180px;top:721px;color:#5e5e5e">#</div>
<div class="t" style="left:194px;top:721px;color:#d4bf72">72.0</div>
<div class="a" style="left:261px;top:721px;width:10px;height:16px;background:#333;border-radius:0 3px 3px 0"></div>
<svg style="left:250px;top:725px" width="6" height="8"><path d="M6 0 H3.5 L0.5 4 L3.5 8 H6Z" fill="#d4bf72"/></svg>
<svg style="left:263px;top:725px" width="6" height="8"><path d="M0 0 H2.5 L5.5 4 L2.5 8 H0Z" fill="#777"/></svg>
<div class="btn" style="left:273px;top:721px;width:16px;height:16px;background:#333"></div>
<svg style="left:277px;top:725px" width="8" height="8"><path d="M0.5 0.5 L7.5 7.5 M7.5 0.5 L0.5 7.5" stroke="#ccc" stroke-width="1.1"/></svg>
<svg style="left:14px;top:746px" width="10" height="10"><circle cx="5" cy="5" r="4.2" stroke="#8a8a8a" stroke-width="1.1" fill="none"/></svg>
<div class="t" style="left:30px;top:743px;color:#e6e6e6">Time Offset</div>
<div class="fld" style="left:177px;top:743px;width:94px;height:16px;background:#2b2b2b"></div>
<div class="t" style="left:180px;top:743px;color:#5e5e5e">S</div>
<div class="t" style="left:194px;top:743px;color:#e6e6e6">0.0</div>
<svg style="left:14px;top:768px" width="10" height="10"><circle cx="5" cy="5" r="4.2" stroke="#8a8a8a" stroke-width="1.1" fill="none"/></svg>
<div class="t" style="left:30px;top:765px;color:#e6e6e6">Time Scale</div>
<div class="fld" style="left:177px;top:765px;width:94px;height:16px;background:#2b2b2b"></div>
<div class="t" style="left:180px;top:765px;color:#5e5e5e">#</div>
<div class="t" style="left:194px;top:765px;color:#e6e6e6">1.0</div>
<div class="a" style="left:474px;top:311px;width:14px;height:715px;background:#2b2b2b"></div>
<div class="a" style="left:476px;top:312px;width:10px;height:710px;background:#4a4a4a;border-radius:5px"></div><div class="a" style="left:494px;top:85px;width:30px;height:495px;background:#464646"></div>
<div class="a" style="left:503px;top:90px;width:2px;height:2px;background:#888;box-shadow:4px 0 #888,8px 0 #888"></div>
<div class="a" style="left:495px;top:96px;width:28px;height:28px;background:#161616;border-radius:4px"></div>
<svg style="left:494px;top:85px" width="30" height="495"><path d="M10.3 14.5 L22.7 26.4 L17.5 27 L19.5 31.5 L16 33.5 L14 28.5 L10.3 32Z" stroke="#2ecc71" stroke-width="1.3" fill="none" stroke-linejoin="round"/><path d="M10.3 42.8 L24 58.1 L16.5 58.5 L10.3 65.1Z" fill="#e4e4e4"/><path d="M7 77 L15.5 79.5 L20.5 87 L17.5 90.5 L10 85.5Z" fill="#ddd"/><path d="M17.5 90.5 L20.5 87 L23.5 90 L20.5 93.5Z" fill="#ddd"/><circle cx="14.5" cy="84.5" r="1.2" fill="#464646"/><path d="M7 77 L14 84" stroke="#464646" stroke-width="0.8"/><path d="M9.5 120.5 L22 108" stroke="#ddd" stroke-width="4" stroke-linecap="round"/><path d="M6 124 L7 119.5 L10.5 123Z" fill="#ddd"/><path d="M19.5 106.5 L24 111" stroke="#464646" stroke-width="0.8"/><rect x="4.5" y="140" width="14" height="11" rx="1" fill="#e4e4e4"/><path d="M18 145.5 L24.8 140.5 V151Z" fill="#e4e4e4"/><rect x="6" y="137.5" width="6" height="1.5" fill="#e4e4e4"/><circle cx="8" cy="143" r="1.1" fill="#444"/><path d="M6.5 183.5 L23 166" stroke="#ddd" stroke-width="1.4"/><path d="M7.7 197 H22 V201.5 H17.3 V213 H12.4 V201.5 H7.7Z" fill="#e4e4e4"/><path d="M6.9 226.4 L15 232.2 L11 232.8 L6.9 237.5Z" fill="#ddd"/><path d="M13 227 L20 226.9 L23.2 242.7 L7 242.7 L7 239" stroke="#ddd" stroke-width="0.9" fill="none"/><g fill="#eee"><rect x="18.7" y="225.6" width="2.6" height="2.6"/><rect x="21.9" y="241.4" width="2.6" height="2.6"/><rect x="5.7" y="241.4" width="2.6" height="2.6"/></g><rect x="7.6" y="258.2" width="14.5" height="13.6" fill="#e4e4e4"/><circle cx="15" cy="295" r="8" fill="#e4e4e4"/><path d="M15 315.7 L23 321.5 L20.5 332 L9.5 332 L7 321.5Z" fill="#e4e4e4"/><path transform="translate(15 355.5) scale(1.12)" d="M0 -8.5 L2.3 -2.8 L8.3 -2.7 L3.6 1 L5.2 7 L0 3.6 L-5.2 7 L-3.6 1 L-8.3 -2.7 L-2.3 -2.8Z" fill="#e4e4e4"/><path d="M21.7 383 A6.8 6.8 0 1 0 15 392" stroke="#e4e4e4" stroke-width="3" fill="none"/><path transform="translate(15 414.7)" d="M0 -8.7 Q1.2 -1.2 9 0 Q1.2 1.2 0 8.7 Q-1.2 1.2 -9 0 Q-1.2 -1.2 0 -8.7Z" fill="#e4e4e4"/><g transform="translate(15 445)" fill="#e4e4e4"><circle r="6.3"/><rect x="-1.9" y="-9" width="3.8" height="18"/><rect x="-1.9" y="-9" width="3.8" height="18" transform="rotate(45)"/><rect x="-1.9" y="-9" width="3.8" height="18" transform="rotate(90)"/><rect x="-1.9" y="-9" width="3.8" height="18" transform="rotate(135)"/><circle r="2.8" fill="#464646"/></g><path d="M8 480.5 L12.5 485 L8 489.5 M14 480.5 L18.5 485 L14 489.5" stroke="#bbb" stroke-width="1.3" fill="none"/></svg>
<div class="a" style="left:530px;top:85px;width:1057px;height:22px;background:#1e1e1e"></div>
<div class="tab" style="left:530px;top:85px;width:87px;height:22px"></div>
<div class="t" style="left:535px;top:88px;color:#e6e6e6">Composition 4</div>
<div class="a" style="left:530px;top:107px;width:1057px;height:451px;background:#000"></div>
<div class="a" style="left:693px;top:127px;width:730px;height:410px;background:#00afff"></div>
<div class="a" style="left:1020px;top:294px;width:76px;height:76px;border-radius:50%;background:#52a0ff"></div>
<div class="t" style="left:570px;top:459px;color:#eee;letter-spacing:-0.3px">Hold S <span style="color:#555;mix-blend-mode:difference;-webkit-text-stroke:0">Direct Layer Selection</span></div>
<div class="t" style="left:570px;top:473px;color:#eee;letter-spacing:-0.3px">Space <span style="color:#555;mix-blend-mode:difference;-webkit-text-stroke:0">Play/ Stop</span></div>
<div class="t" style="left:570px;top:487px;color:#eee;letter-spacing:-0.3px">Space + click + drag <span style="color:#555;mix-blend-mode:difference;-webkit-text-stroke:0">Pan</span></div>
<div class="t" style="left:570px;top:501px;color:#eee;letter-spacing:-0.3px">Alt + click + drag <span style="color:#555;mix-blend-mode:difference;-webkit-text-stroke:0">Move Pivot Point</span></div>
<div class="t" style="left:570px;top:515px;color:#eee;letter-spacing:-0.3px">Shift <span style="color:#555;mix-blend-mode:difference;-webkit-text-stroke:0">Enable Snapping</span></div>
<div class="t" style="left:998px;top:535px;color:#eee">Viewport Quality: High</div>
<div class="a" style="left:530px;top:558px;width:1057px;height:22px;background:#464646"></div>
<div class="fld" style="left:535px;top:561px;width:78px;height:16px;background:#2b2b2b"></div>
<div class="t" style="left:538px;top:561px;color:#e6e6e6">38%</div>
<svg style="left:600px;top:567px" width="9" height="5"><path d="M0.5 0.5 L4.5 4.5 L8.5 0.5" stroke="#ccc" fill="none"/></svg>
<div class="btn" style="left:866px;top:560px;width:100px;height:19px;background:#2f2f2f"></div>
<div class="a" style="left:886px;top:561px;width:1px;height:17px;background:#1e1e1e"></div>
<div class="a" style="left:906px;top:561px;width:1px;height:17px;background:#1e1e1e"></div>
<div class="a" style="left:926px;top:561px;width:1px;height:17px;background:#1e1e1e"></div>
<div class="a" style="left:946px;top:561px;width:1px;height:17px;background:#1e1e1e"></div>
<svg style="left:871px;top:564px" width="11" height="11"><rect x="0" y="0" width="1.6" height="11" fill="#ddd"/><path d="M10 0 L2.5 5.5 L10 11Z" fill="#ddd"/></svg>
<svg style="left:891px;top:564px" width="11" height="11"><path d="M8 0 L0.5 5.5 L8 11Z" fill="#ddd"/><rect x="9" y="0" width="1.6" height="11" fill="#ddd"/></svg>
<svg style="left:911px;top:564px" width="11" height="11"><path d="M2 0 L10 5.5 L2 11Z" fill="#ddd"/></svg>
<svg style="left:931px;top:564px" width="11" height="11"><rect x="0" y="0" width="1.6" height="11" fill="#ddd"/><path d="M2.5 0 L10 5.5 L2.5 11Z" fill="#ddd"/></svg>
<svg style="left:951px;top:564px" width="11" height="11"><path d="M0.5 0 L8 5.5 L0.5 11Z" fill="#ddd"/><rect x="9" y="0" width="1.6" height="11" fill="#ddd"/></svg>
<div class="btn" style="left:971px;top:560px;width:20px;height:19px;background:#2f2f2f"></div>
<svg style="left:974px;top:563px" width="14" height="12"><path d="M1 4 V11 H13 V4" stroke="#ddd" stroke-width="1.4" fill="none"/><path d="M1 4 H8" stroke="#ddd" stroke-width="1.4"/><path d="M8 1 L12 4 L8 7Z" fill="#ddd"/></svg>
<div class="fld" style="left:1232px;top:559px;width:37px;height:19px;background:#2f2f2f"></div>
<svg style="left:1233px;top:564px" width="15" height="9"><path d="M4 0.5 H14 V8.5 H4 L0.5 4.5Z" fill="#ddd"/><circle cx="5" cy="4.5" r="1.5" fill="#2f2f2f"/></svg>
<div class="t" style="left:1257px;top:561px;color:#cfcfcf">0</div>
<div class="btn" style="left:1272px;top:559px;width:31px;height:19px;background:#2f2f2f"></div>
<div class="a" style="left:1291px;top:560px;width:1px;height:17px;background:#262626"></div>
<svg style="left:1294px;top:564px" width="7" height="9"><path d="M0.5 0.5 L6 4.5 L0.5 8.5Z" stroke="#999" fill="none"/></svg>
<div class="btn" style="left:1307px;top:559px;width:31px;height:19px;background:#2f2f2f"></div>
<div class="a" style="left:1326px;top:560px;width:1px;height:17px;background:#262626"></div>
<svg style="left:1329px;top:564px" width="7" height="9"><path d="M0.5 0.5 L6 4.5 L0.5 8.5Z" stroke="#999" fill="none"/></svg>
<div class="btn" style="left:1343px;top:559px;width:31px;height:19px;background:#2f2f2f"></div>
<div class="a" style="left:1362px;top:560px;width:1px;height:17px;background:#262626"></div>
<svg style="left:1365px;top:564px" width="7" height="9"><path d="M0.5 0.5 L6 4.5 L0.5 8.5Z" stroke="#999" fill="none"/></svg>
<div class="btn" style="left:1378px;top:559px;width:20px;height:19px;background:#2f2f2f"></div>
<div class="btn" style="left:1400px;top:559px;width:20px;height:19px;background:#2f2f2f"></div>
<div class="btn" style="left:1423px;top:559px;width:31px;height:19px;background:#2f2f2f"></div>
<div class="a" style="left:1442px;top:560px;width:1px;height:17px;background:#262626"></div>
<svg style="left:1445px;top:564px" width="7" height="9"><path d="M0.5 0.5 L6 4.5 L0.5 8.5Z" stroke="#999" fill="none"/></svg>
<div class="btn" style="left:1458px;top:559px;width:31px;height:19px;background:#2f2f2f"></div>
<div class="a" style="left:1477px;top:560px;width:1px;height:17px;background:#262626"></div>
<svg style="left:1480px;top:564px" width="7" height="9"><path d="M0.5 0.5 L6 4.5 L0.5 8.5Z" stroke="#999" fill="none"/></svg>
<div class="btn" style="left:1493px;top:559px;width:31px;height:19px;background:#2f2f2f"></div>
<div class="a" style="left:1512px;top:560px;width:1px;height:17px;background:#262626"></div>
<svg style="left:1515px;top:564px" width="7" height="9"><path d="M0.5 0.5 L6 4.5 L0.5 8.5Z" stroke="#999" fill="none"/></svg>
<div class="btn" style="left:1528px;top:559px;width:31px;height:19px;background:#2f2f2f"></div>
<div class="a" style="left:1547px;top:560px;width:1px;height:17px;background:#262626"></div>
<svg style="left:1550px;top:564px" width="7" height="9"><path d="M0.5 0.5 L6 4.5 L0.5 8.5Z" stroke="#999" fill="none"/></svg>
<div class="btn" style="left:1563px;top:559px;width:20px;height:19px;background:#2f2f2f"></div>
<svg style="left:1275px;top:563px" width="14" height="13"><path d="M0 3.5 H3 L7 0 V12 L3 8.5 H0Z" fill="#2ecc71"/><path d="M9 3 Q11 6 9 9 M11 1 Q14.5 6 11 11" stroke="#2ecc71" stroke-width="1.4" fill="none"/></svg>
<svg style="left:1310px;top:563px" width="14" height="13"><path d="M0 0 V4.5 A3.5 3.5 0 0 0 7 4.5 V0" stroke="#ddd" stroke-width="2" fill="none" transform="translate(6 8) rotate(45) translate(-3.5 -5)"/></svg>
<svg style="left:1346px;top:563px" width="14" height="13"><path d="M4 0 V13 M9 0 V13 M0 4 H13 M0 9 H13" stroke="#ddd" stroke-width="1.3"/></svg>
<svg style="left:1381px;top:563px" width="14" height="13"><rect x="0" y="0" width="3.5" height="3" fill="#2ecc71"/><rect x="0" y="5" width="3.5" height="7" fill="#2ecc71"/><rect x="6" y="0.8" width="8" height="5" fill="none" stroke="#2ecc71" stroke-width="1.4"/><rect x="5.5" y="8" width="9" height="4" fill="#2ecc71"/></svg>
<svg style="left:1403px;top:563px" width="14" height="13"><path d="M0 1 L4 6 L0 11 M5 1 L9 6 L5 11 M10 1 L14 6 L10 11" stroke="#ccc" stroke-width="1.6" fill="none"/></svg>
<svg style="left:1426px;top:563px" width="14" height="13"><rect x="0.7" y="0.7" width="13" height="9" fill="none" stroke="#ddd" stroke-width="1.4"/><rect x="0" y="10" width="14" height="2" fill="#ddd"/></svg>
<svg style="left:1461px;top:563px" width="14" height="13"><rect x="0.5" y="0.5" width="9" height="6" fill="none" stroke="#ccc"/><path d="M2.5 8.5 H11.5 V2.5 M4.5 10.5 H13.5 V4.5" stroke="#ccc" fill="none"/></svg>
<svg style="left:1496px;top:563px" width="14" height="13"><rect x="0" y="0" width="8" height="8" fill="#ccc"/><rect x="4.5" y="4.5" width="9" height="9" fill="#2f2f2f" stroke="#ddd" stroke-width="1.3"/></svg>
<svg style="left:1531px;top:563px" width="14" height="13"><g fill="#2ecc71"><rect x="0" y="0" width="3" height="3"/><rect x="6" y="0" width="3" height="3"/><rect x="3" y="3" width="3" height="3"/><rect x="9" y="3" width="3" height="3"/><rect x="0" y="6" width="3" height="3"/><rect x="6" y="6" width="3" height="3"/><rect x="3" y="9" width="3" height="3"/><rect x="9" y="9" width="3" height="3"/></g></svg>
<svg style="left:1566px;top:563px" width="14" height="13"><g fill="#ddd" transform="translate(7 6.5)"><circle r="4.5"/><rect x="-1.5" y="-7" width="3" height="14"/><rect x="-1.5" y="-7" width="3" height="14" transform="rotate(45)"/><rect x="-1.5" y="-7" width="3" height="14" transform="rotate(90)"/><rect x="-1.5" y="-7" width="3" height="14" transform="rotate(135)"/><circle r="2" fill="#2f2f2f"/></g></svg><div class="a" style="left:1593px;top:85px;width:321px;height:22px;background:#1e1e1e"></div>
<div class="tab" style="left:1593px;top:85px;width:40px;height:22px"></div>
<div class="t" style="left:1598px;top:88px;color:#e6e6e6">Color</div>
<div class="a" style="left:1634px;top:85px;width:69px;height:22px;background:#262626;border-radius:3px 3px 0 0"></div>
<div class="t" style="left:1639px;top:88px;color:#e6e6e6">Add Layers</div>
<div class="a" style="left:1593px;top:107px;width:321px;height:377px;background:#464646;overflow:hidden"></div>
<div class="a" style="left:1593px;top:107px;width:307px;height:160px;overflow:hidden">
<div class="a" style="left:53px;top:-48px;width:200px;height:200px;border-radius:50%;background:conic-gradient(from 0deg,hsl(90,100%,50%),hsl(60,100%,50%),hsl(30,100%,50%),hsl(0,100%,50%),hsl(330,100%,50%),hsl(300,100%,50%),hsl(270,100%,50%),hsl(240,100%,50%),hsl(210,100%,50%),hsl(180,100%,50%),hsl(150,100%,50%),hsl(120,100%,50%),hsl(90,100%,50%))"></div>
<div class="a" style="left:78px;top:-23px;width:150px;height:150px;border-radius:50%;background:#464646"></div>
</div>
<div class="a" style="left:1702px;top:116px;width:90px;height:90px;background:linear-gradient(to right,#000,rgba(0,0,0,0)),linear-gradient(to bottom,#fff,hsl(248,100%,50%))"></div>
<svg style="left:1785px;top:169px" width="14" height="14"><circle cx="7" cy="7" r="5.8" stroke="#eee" stroke-width="1.2" fill="none"/></svg>
<svg style="left:1704px;top:233px" width="14" height="14"><circle cx="7" cy="7" r="5.8" stroke="#eee" stroke-width="1.2" fill="none"/></svg>
<div class="a" style="left:1900px;top:107px;width:14px;height:377px;background:#3a3a3a"></div>
<div class="a" style="left:1902px;top:153px;width:10px;height:302px;background:#555;border-radius:5px"></div>
<div class="a" style="left:1600px;top:273px;width:22px;height:22px;background:#6755ff;border-radius:3px"></div>
<div class="t" style="left:1625px;top:276px;color:#e6e6e6">Medium Slateblue</div>
<div class="btn" style="left:1871px;top:273px;width:22px;height:22px;background:#2f2f2f"></div>
<svg style="left:1876px;top:278px" width="13" height="13"><path d="M2 11 L8 5" stroke="#aaa" stroke-width="2"/><path d="M7 3 L10 6" stroke="#ccc" stroke-width="3"/><circle cx="10.5" cy="2.5" r="2" fill="#ccc"/></svg>
<div class="a" style="left:1600px;top:300px;width:50px;height:18px;background:#3e3e3e;border:1px solid #333;border-radius:3px"></div>
<div class="t" style="left:1603px;top:301px;color:#e6e6e6">Hex</div>
<svg style="left:1636px;top:307px" width="9" height="5"><path d="M0.5 0.5 L4.5 4.5 L8.5 0.5" stroke="#bbb" fill="none"/></svg>
<div class="fld" style="left:1653px;top:298px;width:240px;height:22px;background:#2b2b2b"></div>
<div class="t" style="left:1657px;top:301px;color:#555">#</div>
<div class="t" style="left:1670px;top:301px;color:#e6e6e6">6755ff</div>
<div class="a" style="left:1600px;top:330px;width:236px;height:5px;background:#e8e8e8;border-radius:3px"></div>
<div class="a" style="left:1829px;top:327px;width:11px;height:11px;background:#6ec9b0;border-radius:50%"></div>
<div class="a" style="left:1832px;top:330px;width:5px;height:5px;background:#4aa88d;border-radius:50%"></div>
<div class="fld" style="left:1849px;top:324px;width:44px;height:16px;background:#2b2b2b"></div>
<div class="t" style="left:1853px;top:324px;color:#555">A</div>
<div class="t" style="left:1865px;top:324px;color:#e6e6e6">255</div>
<div class="a" style="left:1597px;top:346px;width:299px;height:22px;background:#262626"></div>
<div class="a" style="left:1599px;top:348px;width:148px;height:20px;background:#464646;border-radius:3px 3px 0 0"></div>
<div class="t" style="left:1648px;top:349px;color:#e6e6e6">Swatches</div>
<div class="t" style="left:1793px;top:349px;color:#b5b5b5">Generator</div>
<div class="a" style="left:1598px;top:371px;width:257px;height:19px;background:#555;border-radius:3px"></div>
<div class="a" style="left:1599px;top:372px;width:62px;height:17px;background:#262626;border-radius:3px"></div>
<svg style="left:1605px;top:375px" width="12" height="11"><path d="M1 0 V11 M4 0 V11 M6.5 0 L10.5 11" stroke="#2ecc71" stroke-width="1.8"/></svg>
<div class="t" style="left:1621px;top:372px;color:#e6e6e6">Library</div>
<svg style="left:1670px;top:375px" width="11" height="11"><path d="M0.5 2 H5 L6 0.5 H10.5 V10.5 H0.5Z" fill="none" stroke="#ccc"/><path d="M2.5 5 H8.5 M2.5 7.5 H8.5" stroke="#ccc"/></svg>
<div class="t" style="left:1686px;top:372px;color:#e6e6e6">Project</div>
<svg style="left:1738px;top:374px" width="10" height="12"><path d="M0.5 0.5 H6 L9.5 4 V11.5 H0.5Z M6 0.5 V4 H9.5" fill="none" stroke="#ccc"/></svg>
<div class="t" style="left:1752px;top:372px;color:#e6e6e6">Scene</div>
<svg style="left:1801px;top:375px" width="12" height="12"><path d="M3 0.7 H8.5 Q11.3 0.7 11.3 3.5 V6.5 L6.5 11.3 H3.5 Q0.7 11.3 0.7 8.5 V3.5 Q0.7 0.7 3 0.7Z" fill="none" stroke="#ccc" stroke-width="1.2"/><path d="M11 6.5 L6.5 11" stroke="#ccc" stroke-width="1.5"/></svg>
<div class="t" style="left:1815px;top:372px;color:#e6e6e6">Labels</div>
<div class="a" style="left:1857px;top:371px;width:38px;height:19px;background:#555;border-radius:3px"></div>
<div class="a" style="left:1858px;top:372px;width:17px;height:17px;background:#262626;border-radius:3px"></div>
<svg style="left:1862px;top:376px" width="9" height="9"><g fill="#2ecc71"><rect x="0" y="0" width="3.5" height="3.5"/><rect x="5.5" y="0" width="3.5" height="3.5"/><rect x="0" y="5.5" width="3.5" height="3.5"/><rect x="5.5" y="5.5" width="3.5" height="3.5"/></g></svg>
<svg style="left:1880px;top:376px" width="11" height="9"><path d="M0 1 H11 M0 4.5 H11 M0 8 H11" stroke="#ddd" stroke-width="1.2"/></svg>
<div class="a" style="left:1598px;top:393px;width:276px;height:17px;background:#505050;border-radius:3px"></div>
<div class="t" style="left:1601px;top:394px;color:#e6e6e6">new</div>
<svg style="left:1860px;top:399px" width="9" height="5"><path d="M0.5 0.5 L4.5 4.5 L8.5 0.5" stroke="#ccc" fill="none"/></svg>
<div class="a" style="left:1880px;top:400px;width:2px;height:2px;background:#ddd;box-shadow:5px 0 #ddd,10px 0 #ddd"></div>
<div class="a" style="left:1598px;top:410px;width:297px;height:74px;background:#262626"></div>
<div class="a" style="left:1600px;top:412px;width:18px;height:18px;background:#8e4dff;border-radius:3px"></div>
<div class="a" style="left:1622px;top:412px;width:18px;height:18px;background:#4da1ff;border-radius:3px"></div>
<div class="a" style="left:1644px;top:412px;width:18px;height:18px;background:#ff6e47;border-radius:3px"></div>
<div class="a" style="left:1666px;top:412px;width:18px;height:18px;background:#4cf5a4;border-radius:3px"></div>
<div class="a" style="left:1688px;top:412px;width:18px;height:18px;background:#ff4a5a;border-radius:3px"></div>
<div class="a" style="left:1710px;top:412px;width:18px;height:18px;background:#ff4ec2;border-radius:3px"></div>
<div class="a" style="left:1732px;top:412px;width:18px;height:18px;background:#ffcf4a;border-radius:3px"></div>
<div class="a" style="left:1754px;top:412px;width:18px;height:18px;background:#3f68dd;border-radius:3px"></div>
<div class="a" style="left:1776px;top:412px;width:18px;height:18px;background:#4ddccd;border-radius:3px"></div>
<div class="a" style="left:1798px;top:412px;width:18px;height:18px;background:#d77fd6;border-radius:3px"></div>
<div class="a" style="left:1820px;top:412px;width:18px;height:18px;background:#b0e98a;border-radius:3px"></div>
<div class="a" style="left:1842px;top:412px;width:18px;height:18px;background:#6a4dff;border-radius:3px"></div>
<div class="a" style="left:1593px;top:490px;width:321px;height:22px;background:#1e1e1e"></div>
<div class="tab" style="left:1593px;top:490px;width:38px;height:22px"></div>
<div class="t" style="left:1598px;top:493px;color:#e6e6e6">Align</div>
<div class="a" style="left:1593px;top:512px;width:321px;height:68px;background:#464646"></div>
<div class="t" style="left:1601px;top:523px;color:#e6e6e6">Alignment</div>
<div class="t" style="left:1601px;top:551px;color:#e6e6e6">Distribution</div>
<div class="btn" style="left:1790px;top:522px;width:54px;height:18px;background:#2a2a2a"></div>
<svg style="left:1792px;top:524px" width="14" height="14"><path d="M1.5 1 V13" stroke="#e6e6e6"/><path d="M3 5 H8 M3 10 H12" stroke="#e6e6e6" stroke-width="2"/></svg>
<div class="a" style="left:1808px;top:523px;width:1px;height:16px;background:#444"></div>
<svg style="left:1810px;top:524px" width="14" height="14"><path d="M7 1 V13" stroke="#e6e6e6"/><path d="M4 5 H10 M2 9 H12" stroke="#e6e6e6" stroke-width="2"/></svg>
<div class="a" style="left:1826px;top:523px;width:1px;height:16px;background:#444"></div>
<svg style="left:1828px;top:524px" width="14" height="14"><path d="M12.5 1 V13" stroke="#e6e6e6"/><path d="M6 5 H11 M2 10 H11" stroke="#e6e6e6" stroke-width="2"/></svg>
<div class="btn" style="left:1852px;top:522px;width:54px;height:18px;background:#2a2a2a"></div>
<svg style="left:1854px;top:524px" width="14" height="14"><path d="M1 1.5 H13" stroke="#e6e6e6"/><path d="M4 3 V12 M9 3 V8" stroke="#e6e6e6" stroke-width="2"/></svg>
<div class="a" style="left:1870px;top:523px;width:1px;height:16px;background:#444"></div>
<svg style="left:1872px;top:524px" width="14" height="14"><path d="M1 7 H13" stroke="#e6e6e6"/><path d="M5 3 V12 M9 4 V10" stroke="#e6e6e6" stroke-width="2"/></svg>
<div class="a" style="left:1888px;top:523px;width:1px;height:16px;background:#444"></div>
<svg style="left:1890px;top:524px" width="14" height="14"><path d="M1 12.5 H13" stroke="#e6e6e6"/><path d="M5 6 V11 M10 2 V11" stroke="#e6e6e6" stroke-width="2"/></svg>
<div class="btn" style="left:1790px;top:550px;width:54px;height:18px;background:#2a2a2a"></div>
<svg style="left:1792px;top:552px" width="14" height="14"><path d="M1.5 1 V13 M12.5 1 V13" stroke="#e6e6e6"/><path d="M6 4 V11" stroke="#e6e6e6" stroke-width="2"/></svg>
<div class="a" style="left:1808px;top:551px;width:1px;height:16px;background:#444"></div>
<svg style="left:1810px;top:552px" width="14" height="14"><path d="M1 1.5 H13 M1 12.5 H13" stroke="#e6e6e6"/><path d="M3 7 H11" stroke="#e6e6e6" stroke-width="2"/></svg>
<div class="a" style="left:1826px;top:551px;width:1px;height:16px;background:#444"></div>
<svg style="left:1828px;top:552px" width="14" height="14"><path d="M1 4 V1 H4 M10 1 H13 V4 M1 10 V13 H4 M10 13 H13 V10" stroke="#e6e6e6"/><path d="M5 9 V11 M9 5 V8" stroke="#e6e6e6" stroke-width="2"/></svg><div class="a" style="left:494px;top:586px;width:1420px;height:22px;background:#1e1e1e"></div>
<div class="tab" style="left:494px;top:586px;width:89px;height:22px"></div>
<div class="t" style="left:499px;top:589px;color:#e6e6e6">Scene Window</div>
<div class="a" style="left:584px;top:586px;width:100px;height:22px;background:#262626;border-radius:3px 3px 0 0"></div>
<div class="t" style="left:589px;top:589px;color:#e6e6e6">JavaScript Editor</div>
<div class="a" style="left:685px;top:586px;width:111px;height:22px;background:#262626;border-radius:3px 3px 0 0"></div>
<div class="t" style="left:690px;top:589px;color:#e6e6e6">Dependency Graph</div>
<div class="a" style="left:494px;top:608px;width:1420px;height:1px;background:#2ecc71"></div>
<div class="a" style="left:494px;top:609px;width:1420px;height:21px;background:#262626"></div>
<div class="a" style="left:1557px;top:610px;width:352px;height:20px;background:#464646;border-radius:3px 3px 0 0"></div>
<div class="t" style="left:627px;top:611px;color:#b5b5b5">Composition 1</div>
<svg style="left:835px;top:616px" width="8" height="8"><path d="M0.5 0.5 L7.5 7.5 M7.5 0.5 L0.5 7.5" stroke="#aaa" stroke-width="1.1"/></svg>
<div class="a" style="left:852px;top:613px;width:1px;height:13px;background:#aaa"></div>
<div class="t" style="left:979px;top:611px;color:#b5b5b5">Composition 2</div>
<svg style="left:1187px;top:616px" width="8" height="8"><path d="M0.5 0.5 L7.5 7.5 M7.5 0.5 L0.5 7.5" stroke="#aaa" stroke-width="1.1"/></svg>
<div class="a" style="left:1204px;top:613px;width:1px;height:13px;background:#aaa"></div>
<div class="t" style="left:1332px;top:611px;color:#b5b5b5">Composition 3</div>
<svg style="left:1539px;top:616px" width="8" height="8"><path d="M0.5 0.5 L7.5 7.5 M7.5 0.5 L0.5 7.5" stroke="#aaa" stroke-width="1.1"/></svg>
<div class="t" style="left:1684px;top:611px;color:#e6e6e6">Composition 4</div>
<svg style="left:1892px;top:616px" width="8" height="8"><path d="M0.5 0.5 L7.5 7.5 M7.5 0.5 L0.5 7.5" stroke="#aaa" stroke-width="1.1"/></svg>
<div class="a" style="left:494px;top:630px;width:465px;height:346px;background:#2b2b2b"></div>
<div class="a" style="left:494px;top:630px;width:465px;height:23px;background:#3a3a3a"></div>
<div class="fld" style="left:496px;top:632px;width:254px;height:20px;border-radius:10px;background:#2b2b2b"></div>
<svg style="left:500px;top:635px" width="13" height="13"><circle cx="5" cy="5" r="4" stroke="#ddd" stroke-width="1.3" fill="none"/><path d="M8 8 L11.5 11.5" stroke="#ddd" stroke-width="1.8"/></svg>
<div class="t" style="left:520px;top:634px;color:#8a8a8a">Enter a layer name</div>
<div class="btn" style="left:753px;top:633px;width:20px;height:19px;background:#2f2f2f"></div>
<svg style="left:757px;top:636px" width="12" height="12"><path d="M6 1 V11 M1 6 H11" stroke="#eee" stroke-width="2"/></svg>
<div class="btn" style="left:797px;top:633px;width:20px;height:19px;background:#2f2f2f"></div>
<div class="btn" style="left:819px;top:633px;width:20px;height:19px;background:#2f2f2f"></div>
<div class="btn" style="left:841px;top:633px;width:20px;height:19px;background:#2f2f2f"></div>
<svg style="left:800px;top:636px" width="14" height="14"><circle cx="4" cy="10" r="3.5" fill="#555"/><circle cx="6" cy="8" r="3.5" fill="#777"/><circle cx="9" cy="5" r="4" fill="#ddd"/></svg>
<svg style="left:822px;top:636px" width="14" height="14"><g fill="#ccc"><circle cx="2" cy="1.5" r="1.2"/><circle cx="8" cy="1.5" r="1.2"/><circle cx="1.5" cy="7.5" r="1.2"/></g><path d="M8 5 L9 8 L12 9 L9 10 L8 13 L7 10 L4 9 L7 8Z" fill="#ddd"/></svg>
<svg style="left:844px;top:636px" width="14" height="14"><path d="M0 2 H14 M0 7 H14 M0 12 H14" stroke="#ccc" stroke-width="1"/><circle cx="5" cy="2" r="1.8" fill="#2f2f2f" stroke="#ccc"/><circle cx="9" cy="7" r="1.8" fill="#2f2f2f" stroke="#ccc"/><circle cx="5" cy="12" r="1.8" fill="#2f2f2f" stroke="#ccc"/></svg>
<div class="fld" style="left:863px;top:632px;width:94px;height:20px;background:#2b2b2b"></div>
<div class="t" style="left:868px;top:634px;color:#444">F</div>
<div class="t" style="left:880px;top:634px;color:#e6e6e6">72</div>
<div class="a" style="left:494px;top:653px;width:465px;height:19px;background:#444"></div>
<svg style="left:501px;top:656px" width="10" height="12"><path d="M2.5 5 V3.5 A2.5 2.5 0 0 1 7.5 3.5 V5" stroke="#cfcfcf" stroke-width="1.4" fill="none"/><rect x="1" y="5" width="8" height="6.5" fill="#cfcfcf"/><circle cx="5" cy="8.2" r="1" fill="#444"/></svg>
<svg style="left:517px;top:658px" width="14" height="9"><path d="M0.5 4.5 Q7 -3 13.5 4.5 Q7 12 0.5 4.5Z" stroke="#cfcfcf" fill="none" stroke-width="1.1"/><circle cx="7" cy="4.5" r="2" fill="#cfcfcf"/></svg>
<svg style="left:537px;top:656px" width="12" height="13"><path d="M6 0.5 L11.5 3 V9.5 L6 12.5 L0.5 9.5 V3Z M0.5 3 L6 6 L11.5 3 M6 6 V12.5" stroke="#cfcfcf" fill="none"/></svg>
<svg style="left:556px;top:657px" width="14" height="11"><path d="M0 3.5 H3 L6.5 0.5 V10.5 L3 7.5 H0Z" fill="#cfcfcf"/><path d="M8.5 3 Q10 5.5 8.5 8 M10.5 1 Q13.5 5.5 10.5 10" stroke="#cfcfcf" fill="none" stroke-width="1.1"/></svg>
<svg style="left:575px;top:656px" width="13" height="13"><path d="M1.5 11.5 L8 5" stroke="#cfcfcf" stroke-width="1"/><path d="M7 3 L10 6" stroke="#cfcfcf" stroke-width="2.5"/><circle cx="10.5" cy="2.5" r="2" fill="#cfcfcf"/></svg>
<svg style="left:593px;top:658px" width="14" height="9"><path d="M4 0.5 H13.5 V8.5 H4 L0.5 4.5Z" fill="#cfcfcf"/><circle cx="5" cy="4.5" r="1.5" fill="#444"/></svg>
<div class="t" style="left:649px;top:655px;color:#e6e6e6">Name</div>
<div class="a" style="left:494px;top:672px;width:451px;height:110px;background:#333"></div>
<div class="a" style="left:496px;top:674px;width:18px;height:18px;background:#292929;border-radius:3px"></div>
<div class="a" style="left:515px;top:674px;width:18px;height:18px;background:#292929;border-radius:3px"></div>
<svg style="left:518px;top:677px" width="12" height="12"><circle cx="6" cy="6.3" r="4.8" stroke="#ddd" stroke-width="1.2" fill="none"/><path d="M3.5 6 L5.8 8.3 L11 2.5" stroke="#ddd" stroke-width="1.5" fill="none"/></svg>
<div class="a" style="left:573px;top:675px;width:17px;height:17px;background:#6ee09b;border-radius:3px"></div>
<svg style="left:593px;top:679px" width="14" height="9"><path d="M4 0.5 H13.5 V8.5 H4 L0.5 4.5Z" fill="#ddd"/><circle cx="5" cy="4.5" r="1.5" fill="#333"/></svg>
<div class="a" style="left:611px;top:674px;width:31px;height:18px;background:#2c2c2c;border-radius:3px"></div>
<svg style="left:614px;top:681px" width="9" height="5"><path d="M0.5 0.5 L4.5 4.5 L8.5 0.5" stroke="#777" fill="none"/></svg>
<svg style="left:649px;top:675px" width="16" height="16"><path d="M0 5 H5.5 V9 H9.2 V14 H0Z" fill="#a8d4ff"/><path d="M6.5 1.3 H14 M6.5 4.3 H14 M6.5 7.3 H14" stroke="#222" stroke-width="2.2"/><path d="M6.5 1.3 H14 M6.5 4.3 H14 M6.5 7.3 H14" stroke="#eee" stroke-width="1"/></svg>
<div class="t" style="left:667px;top:675px;color:#e6e6e6">Color Array</div>
<div class="a" style="left:905px;top:675px;width:21px;height:16px;background:#2a2a2a;border-radius:4px"></div>
<div class="a" style="left:915px;top:675px;width:1px;height:16px;background:#3a3a3a"></div>
<svg style="left:907px;top:679px" width="18" height="8"><path d="M6 0 H3.5 L0.5 4 L3.5 8 H6Z" fill="#d4bf72"/><path d="M11 0 H13.5 L16.5 4 L13.5 8 H11Z" fill="#cc55ee"/></svg>
<svg style="left:930px;top:678px" width="11" height="11"><circle cx="5.5" cy="5.5" r="4.5" stroke="#888" stroke-width="1.1" fill="none"/></svg>
<div class="a" style="left:496px;top:696px;width:18px;height:18px;background:#292929;border-radius:3px"></div>
<div class="a" style="left:515px;top:696px;width:18px;height:18px;background:#292929;border-radius:3px"></div>
<svg style="left:518px;top:699px" width="12" height="12"><circle cx="6" cy="6.3" r="4.8" stroke="#ddd" stroke-width="1.2" fill="none"/><path d="M3.5 6 L5.8 8.3 L11 2.5" stroke="#ddd" stroke-width="1.5" fill="none"/></svg>
<div class="a" style="left:573px;top:697px;width:17px;height:17px;background:#c8ee7d;border-radius:3px"></div>
<svg style="left:593px;top:701px" width="14" height="9"><path d="M4 0.5 H13.5 V8.5 H4 L0.5 4.5Z" fill="#ddd"/><circle cx="5" cy="4.5" r="1.5" fill="#333"/></svg>
<svg style="left:668px;top:698px" width="14" height="14"><path d="M2.5 2.5 L11.5 11" stroke="#6a9a6a" stroke-width="0.6"/><g stroke="#8fdf98" stroke-width="1.1"><path d="M0.5 0.5 L3.5 3.5 M3.5 0.5 L0.5 3.5 M1.5 9.5 L4.5 12.5 M4.5 9.5 L1.5 12.5 M9.5 9 L13 12.5 M13 9 L9.5 12.5"/></g><rect x="9.8" y="1" width="2.4" height="2.4" fill="#8fdf98"/><rect x="5.2" y="5.2" width="2.6" height="2.6" fill="#8fdf98"/></svg>
<div class="t" style="left:686px;top:697px;color:#e6e6e6">Random [Index]</div>
<div class="a" style="left:905px;top:697px;width:21px;height:16px;background:#2a2a2a;border-radius:4px"></div>
<div class="a" style="left:915px;top:697px;width:1px;height:16px;background:#3a3a3a"></div>
<svg style="left:907px;top:701px" width="18" height="8"><path d="M6 0 H3.5 L0.5 4 L3.5 8 H6Z" fill="#777"/><path d="M11 0 H13.5 L16.5 4 L13.5 8 H11Z" fill="#cc55ee"/></svg>
<svg style="left:930px;top:700px" width="11" height="11"><circle cx="5.5" cy="5.5" r="4.5" stroke="#888" stroke-width="1.1" fill="none"/></svg>
<div class="a" style="left:496px;top:716px;width:449px;height:22px;background:#51543f;border-radius:3px"></div>
<div class="a" style="left:496px;top:718px;width:18px;height:18px;background:#292929;border-radius:3px"></div>
<div class="a" style="left:515px;top:718px;width:18px;height:18px;background:#292929;border-radius:3px"></div>
<svg style="left:518px;top:721px" width="12" height="12"><circle cx="6" cy="6.3" r="4.8" stroke="#ddd" stroke-width="1.2" fill="none"/><path d="M3.5 6 L5.8 8.3 L11 2.5" stroke="#ddd" stroke-width="1.5" fill="none"/></svg>
<div class="a" style="left:573px;top:719px;width:17px;height:17px;background:#c8ee7d;border-radius:3px"></div>
<svg style="left:593px;top:723px" width="14" height="9"><path d="M4 0.5 H13.5 V8.5 H4 L0.5 4.5Z" fill="#ddd"/><circle cx="5" cy="4.5" r="1.5" fill="#333"/></svg>
<svg style="left:646px;top:722px" width="18" height="12"><polyline points="0.50,7.16 0.75,6.42 1.00,5.65 1.25,4.88 1.50,4.14 1.75,3.46 2.00,2.86 2.25,2.37 2.50,2.00 2.75,1.78 3.00,1.70 3.25,1.78 3.50,2.00 3.75,2.37 4.00,2.86 4.25,3.46 4.50,4.14 4.75,4.88 5.00,5.65 5.25,6.42 5.50,7.16 5.75,7.84 6.00,8.44 6.25,8.93 6.50,9.30 6.75,9.52 7.00,9.60 7.25,9.52 7.50,9.30 7.75,8.93 8.00,8.44 8.25,7.84 8.50,7.16 8.75,6.42 9.00,5.65 9.25,4.88 9.50,4.14 9.75,3.46 10.00,2.86 10.25,2.37 10.50,2.00 10.75,1.78 11.00,1.70 11.25,1.78 11.50,2.00 11.75,2.37 12.00,2.86 12.25,3.46 12.50,4.14 12.75,4.88 13.00,5.65 13.25,6.42 13.50,7.16 13.75,7.84 14.00,8.44 14.25,8.93 14.50,9.30 14.75,9.52 15.00,9.60 15.25,9.52 15.50,9.30 15.75,8.93 16.00,8.44 16.25,7.84 16.50,7.16 16.75,6.42 17.00,5.65 17.25,4.88 17.50,4.14" stroke="#8fd89a" stroke-width="1.3" fill="none"/></svg>
<div class="t" style="left:667px;top:719px;color:#e6e6e6">Oscillator [Position.X] Sine 1</div>
<div class="a" style="left:905px;top:719px;width:21px;height:16px;background:#2a2a2a;border-radius:4px"></div>
<div class="a" style="left:915px;top:719px;width:1px;height:16px;background:#3a3a3a"></div>
<svg style="left:907px;top:723px" width="18" height="8"><path d="M6 0 H3.5 L0.5 4 L3.5 8 H6Z" fill="#d4bf72"/><path d="M11 0 H13.5 L16.5 4 L13.5 8 H11Z" fill="#cc55ee"/></svg>
<svg style="left:930px;top:722px" width="11" height="11"><circle cx="5.5" cy="5.5" r="4.5" stroke="#888" stroke-width="1.1" fill="none"/></svg>
<div class="a" style="left:496px;top:740px;width:18px;height:18px;background:#292929;border-radius:3px"></div>
<div class="a" style="left:515px;top:740px;width:18px;height:18px;background:#292929;border-radius:3px"></div>
<svg style="left:518px;top:743px" width="12" height="12"><circle cx="6" cy="6.3" r="4.8" stroke="#ddd" stroke-width="1.2" fill="none"/><path d="M3.5 6 L5.8 8.3 L11 2.5" stroke="#ddd" stroke-width="1.5" fill="none"/></svg>
<div class="a" style="left:573px;top:741px;width:17px;height:17px;background:#c8ee7d;border-radius:3px"></div>
<svg style="left:593px;top:745px" width="14" height="9"><path d="M4 0.5 H13.5 V8.5 H4 L0.5 4.5Z" fill="#ddd"/><circle cx="5" cy="4.5" r="1.5" fill="#333"/></svg>
<svg style="left:646px;top:744px" width="18" height="12"><polyline points="0.50,7.16 0.75,6.42 1.00,5.65 1.25,4.88 1.50,4.14 1.75,3.46 2.00,2.86 2.25,2.37 2.50,2.00 2.75,1.78 3.00,1.70 3.25,1.78 3.50,2.00 3.75,2.37 4.00,2.86 4.25,3.46 4.50,4.14 4.75,4.88 5.00,5.65 5.25,6.42 5.50,7.16 5.75,7.84 6.00,8.44 6.25,8.93 6.50,9.30 6.75,9.52 7.00,9.60 7.25,9.52 7.50,9.30 7.75,8.93 8.00,8.44 8.25,7.84 8.50,7.16 8.75,6.42 9.00,5.65 9.25,4.88 9.50,4.14 9.75,3.46 10.00,2.86 10.25,2.37 10.50,2.00 10.75,1.78 11.00,1.70 11.25,1.78 11.50,2.00 11.75,2.37 12.00,2.86 12.25,3.46 12.50,4.14 12.75,4.88 13.00,5.65 13.25,6.42 13.50,7.16 13.75,7.84 14.00,8.44 14.25,8.93 14.50,9.30 14.75,9.52 15.00,9.60 15.25,9.52 15.50,9.30 15.75,8.93 16.00,8.44 16.25,7.84 16.50,7.16 16.75,6.42 17.00,5.65 17.25,4.88 17.50,4.14" stroke="#8fd89a" stroke-width="1.3" fill="none"/></svg>
<div class="t" style="left:667px;top:741px;color:#e6e6e6">Oscillator [Position.X] Sine</div>
<div class="a" style="left:905px;top:741px;width:21px;height:16px;background:#2a2a2a;border-radius:4px"></div>
<div class="a" style="left:915px;top:741px;width:1px;height:16px;background:#3a3a3a"></div>
<svg style="left:907px;top:745px" width="18" height="8"><path d="M6 0 H3.5 L0.5 4 L3.5 8 H6Z" fill="#d4bf72"/><path d="M11 0 H13.5 L16.5 4 L13.5 8 H11Z" fill="#cc55ee"/></svg>
<svg style="left:930px;top:744px" width="11" height="11"><circle cx="5.5" cy="5.5" r="4.5" stroke="#888" stroke-width="1.1" fill="none"/></svg>
<div class="a" style="left:496px;top:762px;width:18px;height:18px;background:#292929;border-radius:3px"></div>
<div class="a" style="left:515px;top:762px;width:18px;height:18px;background:#292929;border-radius:3px"></div>
<div class="a" style="left:534px;top:762px;width:18px;height:18px;background:#292929;border-radius:3px"></div>
<svg style="left:517px;top:767px" width="14" height="9"><path d="M0.5 4.5 Q7 -3 13.5 4.5 Q7 12 0.5 4.5Z" stroke="#ddd" fill="none" stroke-width="1.1"/><circle cx="7" cy="4.5" r="2" fill="#ddd"/></svg>
<div class="a" style="left:573px;top:763px;width:17px;height:17px;background:#fde384;border-radius:3px"></div>
<svg style="left:593px;top:767px" width="14" height="9"><path d="M4 0.5 H13.5 V8.5 H4 L0.5 4.5Z" fill="#ddd"/><circle cx="5" cy="4.5" r="1.5" fill="#333"/></svg>
<svg style="left:649px;top:764px" width="14" height="14"><rect x="0.5" y="0.5" width="13" height="13" stroke="#e8d27a" stroke-width="1" fill="none" stroke-dasharray="3 2"/></svg>
<div class="t" style="left:667px;top:763px;color:#e6e6e6">Ellipse Shape</div>
<div class="a" style="left:905px;top:763px;width:21px;height:16px;background:#2a2a2a;border-radius:4px"></div>
<div class="a" style="left:915px;top:763px;width:1px;height:16px;background:#3a3a3a"></div>
<svg style="left:907px;top:767px" width="18" height="8"><path d="M6 0 H3.5 L0.5 4 L3.5 8 H6Z" fill="#d4bf72"/><path d="M11 0 H13.5 L16.5 4 L13.5 8 H11Z" fill="#777"/></svg>
<svg style="left:930px;top:766px" width="11" height="11"><circle cx="5.5" cy="5.5" r="4.5" stroke="#888" stroke-width="1.1" fill="none"/></svg>
<div class="t" style="left:793px;top:680px;color:#b5ea17;font-size:21px;font-weight:bold;letter-spacing:-0.5px;line-height:24px;-webkit-text-stroke:0">Duplicat it</div>
<div class="a" style="left:945px;top:672px;width:14px;height:292px;background:#2b2b2b"></div>
<div class="a" style="left:947px;top:673px;width:10px;height:289px;background:#474747;border-radius:5px"></div>
<div class="a" style="left:538px;top:712px;width:412px;height:29px;border:4px solid #b5ea17"></div>
<div class="a" style="left:495px;top:964px;width:451px;height:10px;background:#4a4a4a;border-radius:5px"></div>
<div class="a" style="left:494px;top:976px;width:465px;height:22px;background:#464646"></div>
<div class="btn" style="left:497px;top:977px;width:20px;height:20px;background:#333"></div>
<svg style="left:500px;top:983px" width="14" height="9"><path d="M4 0.5 H13.5 V8.5 H4 L0.5 4.5Z" fill="#ddd"/><circle cx="5" cy="4.5" r="1.5" fill="#333"/></svg>
<div class="t" style="left:520px;top:979px;color:#e6e6e6">1 selected</div>
<div class="btn" style="left:750px;top:977px;width:20px;height:20px;background:#333"></div>
<svg style="left:754px;top:981px" width="12" height="12"><rect x="0.7" y="0.7" width="10.6" height="10.6" stroke="#ddd" stroke-width="1.2" fill="none"/><rect x="4" y="4" width="4" height="4" fill="#ddd"/></svg>
<div class="a" style="left:773px;top:977px;width:182px;height:20px;background:#585858;border-radius:4px"></div>
<div class="a" style="left:774px;top:978px;width:90px;height:18px;background:#262626;border-radius:3px"></div>
<svg style="left:778px;top:981px" width="12" height="12"><path d="M1 1 H11 M3 6 H11 M1 11 H11" stroke="#2ecc71" stroke-width="2"/></svg>
<div class="t" style="left:794px;top:979px;color:#e6e6e6">Time Editor</div>
<svg style="left:868px;top:981px" width="12" height="12"><path d="M1.5 0 V12 M0 10.5 H12 M1.5 10.5 L11 3" stroke="#aaa" stroke-width="1"/></svg>
<div class="t" style="left:885px;top:979px;color:#e6e6e6">Graph Editor</div>
<div class="a" style="left:966px;top:630px;width:948px;height:346px;background:#262626"></div>
<div class="a" style="left:959px;top:630px;width:7px;height:346px;background:#1e1e1e"></div>
<div class="a" style="left:966px;top:654px;width:21px;height:310px;background:#1e1e1e"></div>
<div class="a" style="left:1892px;top:654px;width:22px;height:310px;background:#1e1e1e"></div>
<div class="a" style="left:966px;top:630px;width:948px;height:24px;background:#262626"></div>
<svg style="left:966px;top:630px" width="948" height="24"><rect x="21.0" y="16" width="1" height="8" fill="#888"/><rect x="31.9" y="20" width="1" height="4" fill="#888"/><rect x="42.7" y="20" width="1" height="4" fill="#888"/><rect x="53.6" y="20" width="1" height="4" fill="#888"/><rect x="64.5" y="20" width="1" height="4" fill="#888"/><rect x="75.3" y="16" width="1" height="8" fill="#888"/><rect x="86.2" y="20" width="1" height="4" fill="#888"/><rect x="97.0" y="20" width="1" height="4" fill="#888"/><rect x="107.9" y="20" width="1" height="4" fill="#888"/><rect x="118.8" y="20" width="1" height="4" fill="#888"/><rect x="129.6" y="16" width="1" height="8" fill="#888"/><rect x="140.5" y="20" width="1" height="4" fill="#888"/><rect x="151.3" y="20" width="1" height="4" fill="#888"/><rect x="162.2" y="20" width="1" height="4" fill="#888"/><rect x="173.1" y="20" width="1" height="4" fill="#888"/><rect x="183.9" y="16" width="1" height="8" fill="#888"/><rect x="194.8" y="20" width="1" height="4" fill="#888"/><rect x="205.7" y="20" width="1" height="4" fill="#888"/><rect x="216.5" y="20" width="1" height="4" fill="#888"/><rect x="227.4" y="20" width="1" height="4" fill="#888"/><rect x="238.2" y="16" width="1" height="8" fill="#888"/><rect x="249.1" y="20" width="1" height="4" fill="#888"/><rect x="260.0" y="20" width="1" height="4" fill="#888"/><rect x="270.8" y="20" width="1" height="4" fill="#888"/><rect x="281.7" y="20" width="1" height="4" fill="#888"/><rect x="292.6" y="16" width="1" height="8" fill="#888"/><rect x="303.4" y="20" width="1" height="4" fill="#888"/><rect x="314.3" y="20" width="1" height="4" fill="#888"/><rect x="325.2" y="20" width="1" height="4" fill="#888"/><rect x="336.0" y="20" width="1" height="4" fill="#888"/><rect x="346.9" y="16" width="1" height="8" fill="#888"/><rect x="357.7" y="20" width="1" height="4" fill="#888"/><rect x="368.6" y="20" width="1" height="4" fill="#888"/><rect x="379.5" y="20" width="1" height="4" fill="#888"/><rect x="390.3" y="20" width="1" height="4" fill="#888"/><rect x="401.2" y="16" width="1" height="8" fill="#888"/><rect x="412.0" y="20" width="1" height="4" fill="#888"/><rect x="422.9" y="20" width="1" height="4" fill="#888"/><rect x="433.8" y="20" width="1" height="4" fill="#888"/><rect x="444.6" y="20" width="1" height="4" fill="#888"/><rect x="455.5" y="16" width="1" height="8" fill="#888"/><rect x="466.4" y="20" width="1" height="4" fill="#888"/><rect x="477.2" y="20" width="1" height="4" fill="#888"/><rect x="488.1" y="20" width="1" height="4" fill="#888"/><rect x="499.0" y="20" width="1" height="4" fill="#888"/><rect x="509.8" y="16" width="1" height="8" fill="#888"/><rect x="520.7" y="20" width="1" height="4" fill="#888"/><rect x="531.5" y="20" width="1" height="4" fill="#888"/><rect x="542.4" y="20" width="1" height="4" fill="#888"/><rect x="553.3" y="20" width="1" height="4" fill="#888"/><rect x="564.1" y="16" width="1" height="8" fill="#888"/><rect x="575.0" y="20" width="1" height="4" fill="#888"/><rect x="585.8" y="20" width="1" height="4" fill="#888"/><rect x="596.7" y="20" width="1" height="4" fill="#888"/><rect x="607.6" y="20" width="1" height="4" fill="#888"/><rect x="618.4" y="16" width="1" height="8" fill="#888"/><rect x="629.3" y="20" width="1" height="4" fill="#888"/><rect x="640.2" y="20" width="1" height="4" fill="#888"/><rect x="651.0" y="20" width="1" height="4" fill="#888"/><rect x="661.9" y="20" width="1" height="4" fill="#888"/><rect x="672.8" y="16" width="1" height="8" fill="#888"/><rect x="683.6" y="20" width="1" height="4" fill="#888"/><rect x="694.5" y="20" width="1" height="4" fill="#888"/><rect x="705.3" y="20" width="1" height="4" fill="#888"/><rect x="716.2" y="20" width="1" height="4" fill="#888"/><rect x="727.1" y="16" width="1" height="8" fill="#888"/><rect x="737.9" y="20" width="1" height="4" fill="#888"/><rect x="748.8" y="20" width="1" height="4" fill="#888"/><rect x="759.7" y="20" width="1" height="4" fill="#888"/><rect x="770.5" y="20" width="1" height="4" fill="#888"/><rect x="781.4" y="16" width="1" height="8" fill="#888"/><rect x="792.2" y="20" width="1" height="4" fill="#888"/><rect x="803.1" y="20" width="1" height="4" fill="#888"/><rect x="814.0" y="20" width="1" height="4" fill="#888"/><rect x="824.8" y="20" width="1" height="4" fill="#888"/><rect x="835.7" y="16" width="1" height="8" fill="#888"/><rect x="846.5" y="20" width="1" height="4" fill="#888"/><rect x="857.4" y="20" width="1" height="4" fill="#888"/><rect x="868.3" y="20" width="1" height="4" fill="#888"/><rect x="879.1" y="20" width="1" height="4" fill="#888"/><rect x="890.0" y="16" width="1" height="8" fill="#888"/><rect x="900.9" y="20" width="1" height="4" fill="#888"/><rect x="911.7" y="20" width="1" height="4" fill="#888"/><rect x="922.6" y="20" width="1" height="4" fill="#888"/><rect x="933.4" y="20" width="1" height="4" fill="#888"/><rect x="944.3" y="16" width="1" height="8" fill="#888"/></svg>
<div class="t" style="left:983.1px;top:630px;color:#e6e6e6;width:30.0px;overflow:hidden">0</div>
<div class="t" style="left:1034.1px;top:630px;color:#e6e6e6;width:30.0px;overflow:hidden">15</div>
<div class="t" style="left:1088.4px;top:630px;color:#e6e6e6;width:30.0px;overflow:hidden">30</div>
<div class="t" style="left:1142.7px;top:630px;color:#e6e6e6;width:30.0px;overflow:hidden">45</div>
<div class="t" style="left:1197.0px;top:630px;color:#e6e6e6;width:30.0px;overflow:hidden">60</div>
<div class="t" style="left:1251.4px;top:630px;color:#e6e6e6;width:30.0px;overflow:hidden">75</div>
<div class="t" style="left:1305.7px;top:630px;color:#e6e6e6;width:30.0px;overflow:hidden">90</div>
<div class="t" style="left:1356.6px;top:630px;color:#e6e6e6;width:30.0px;overflow:hidden">105</div>
<div class="t" style="left:1411.0px;top:630px;color:#e6e6e6;width:30.0px;overflow:hidden">120</div>
<div class="t" style="left:1465.3px;top:630px;color:#e6e6e6;width:30.0px;overflow:hidden">135</div>
<div class="t" style="left:1519.6px;top:630px;color:#e6e6e6;width:30.0px;overflow:hidden">150</div>
<div class="t" style="left:1573.9px;top:630px;color:#e6e6e6;width:30.0px;overflow:hidden">165</div>
<div class="t" style="left:1628.2px;top:630px;color:#e6e6e6;width:30.0px;overflow:hidden">180</div>
<div class="t" style="left:1682.5px;top:630px;color:#e6e6e6;width:30.0px;overflow:hidden">195</div>
<div class="t" style="left:1736.8px;top:630px;color:#e6e6e6;width:30.0px;overflow:hidden">210</div>
<div class="t" style="left:1791.1px;top:630px;color:#e6e6e6;width:30.0px;overflow:hidden">225</div>
<div class="t" style="left:1845.5px;top:630px;color:#e6e6e6;width:30.0px;overflow:hidden">240</div>
<div class="t" style="left:1899.8px;top:630px;color:#555;width:13.2px;overflow:hidden">255</div>
<div class="a" style="left:987px;top:654px;width:905px;height:17px;background:#444"></div>
<div class="a" style="left:982px;top:653px;width:5px;height:18px;background:#6ec9b0;border-radius:1px"></div>
<div class="a" style="left:1892px;top:653px;width:5px;height:18px;background:#6ec9b0;border-radius:1px"></div>
<div class="a" style="left:987px;top:674px;width:905px;height:18px;background:repeating-linear-gradient(135deg,#8af5b4 0px,#6ee09a 3.5px,#6ee09a 12.3px,#8af5b4 12.8px,#6cd697 13.8px,#62c98a 17.5px,#62c98a 25.25px);"></div>
<div class="t" style="left:995px;top:675px;color:#262626">Color Array</div>
<div class="a" style="left:987px;top:696px;width:905px;height:18px;background:repeating-linear-gradient(135deg,#f0ff9a 0px,#cdf07f 3.5px,#cdf07f 12.3px,#f0ff9a 12.8px,#c6e87a 13.8px,#b8d872 17.5px,#b8d872 25.25px);"></div>
<div class="t" style="left:995px;top:697px;color:#262626">Random [Index]</div>
<div class="a" style="left:987px;top:718px;width:905px;height:18px;background:repeating-linear-gradient(135deg,#ffffd4 0px,#f6feb6 3.5px,#f6feb6 12.3px,#ffffd4 12.8px,#eefaaa 13.8px,#e4f6a2 17.5px,#e4f6a2 25.25px);border:1px solid #fff;"></div>
<svg style="left:988px;top:719px" width="903" height="16"><defs><pattern id="dp" width="3" height="3" patternUnits="userSpaceOnUse"><rect x="0.5" y="0.5" width="2" height="2" fill="#8fc862" fill-opacity="0.6"/></pattern></defs><rect width="903" height="16" fill="url(#dp)"/></svg>
<div class="t" style="left:995px;top:719px;color:#262626">Oscillator [Position.X] Sine 1</div>
<div class="a" style="left:987px;top:740px;width:905px;height:18px;background:repeating-linear-gradient(135deg,#f0ff9a 0px,#cdf07f 3.5px,#cdf07f 12.3px,#f0ff9a 12.8px,#c6e87a 13.8px,#b8d872 17.5px,#b8d872 25.25px);"></div>
<div class="t" style="left:995px;top:741px;color:#262626">Oscillator [Position.X] Sine</div>
<div class="a" style="left:987px;top:762px;width:905px;height:18px;background:#fde47e;border-radius:0 3px 3px 0;"></div>
<div class="t" style="left:995px;top:763px;color:#262626">Ellipse Shape</div>
<div class="a" style="left:960px;top:806px;width:2px;height:1px;background:#888;box-shadow:0 3px #888,0 6px #888,0 9px #888,0 12px #888,0 15px #888"></div>
<div class="a" style="left:1247px;top:648px;width:1px;height:314px;background:#5fbf9f"></div>
<svg style="left:1240px;top:643.5px" width="15" height="10"><path d="M0 0 H15 L7.5 9.5Z" fill="#6ec9b0"/></svg>
<div class="a" style="left:968px;top:964px;width:944px;height:10px;background:#4a4a4a;border-radius:5px"></div>
<div class="a" style="left:966px;top:976px;width:948px;height:22px;background:#464646"></div>
<div class="btn" style="left:968px;top:977px;width:20px;height:20px;background:#333"></div>
<svg style="left:972px;top:981px" width="12" height="12"><path d="M0 1 H12 M0 5 H12" stroke="#ddd" stroke-width="1.3"/><path d="M0 9 H2 M4 9 H8 M10 9 H12 M2 12 H4 M8 12 H10" stroke="#ddd" stroke-width="1.3"/></svg>
<div class="fld" style="left:988px;top:977px;width:152px;height:20px;background:#2b2b2b"></div>
<div class="t" style="left:992px;top:979px;color:#e6e6e6">Default Keyframe Layer</div>
<div class="fld" style="left:1147px;top:977px;width:68px;height:20px;background:#2b2b2b"></div>
<div class="t" style="left:1152px;top:979px;color:#444">F</div>
<div class="t" style="left:1163px;top:979px;color:#e6e6e6">-</div>
<div class="t" style="left:1222px;top:979px;color:#e6e6e6">Align:</div>
<div class="btn" style="left:1259px;top:978px;width:52px;height:18px;background:#2a2a2a"></div>
<div class="a" style="left:1275px;top:979px;width:1px;height:16px;background:#404040"></div>
<div class="a" style="left:1293px;top:979px;width:1px;height:16px;background:#404040"></div>
<svg style="left:1259px;top:978px" width="52" height="18"><g stroke="#ddd" stroke-width="1"><path d="M2.6 2 V16 M26.5 2 V16 M49.3 2 V16"/></g><g stroke="#ddd" stroke-width="1.6"><path d="M7 6 H11 M7 12 H15 M23 6 H25 M28 6 H30 M21 12 H24 M29 12 H32 M41 6 H45 M37 12 H45"/></g><g fill="#6fd3b5"><rect x="4.8" y="5" width="1.8" height="1.8"/><rect x="4.8" y="11" width="1.8" height="1.8"/><rect x="25.6" y="5" width="1.8" height="1.8"/><rect x="25.6" y="11" width="1.8" height="1.8"/><rect x="46.4" y="5" width="1.8" height="1.8"/><rect x="46.4" y="11" width="1.8" height="1.8"/></g></svg>
<div class="btn" style="left:1316px;top:978px;width:17px;height:18px;background:#2a2a2a"></div>
<svg style="left:1316px;top:978px" width="17" height="18"><g fill="#bbb"><rect x="2.5" y="3" width="2" height="2"/><rect x="12.5" y="3" width="2" height="2"/><rect x="2.5" y="13" width="2" height="2"/><rect x="12.5" y="13" width="2" height="2"/><rect x="7.7" y="8.2" width="1.6" height="1.6"/></g><path d="M6 4 H11 M6 14 H11 M3.5 6.5 V11.5 M13.5 6.5 V11.5" stroke="#999" stroke-width="0.8"/></svg>
<div class="btn" style="left:1336px;top:977px;width:32px;height:19px;background:#333"></div>
<div class="a" style="left:1354px;top:978px;width:1px;height:17px;background:#262626"></div>
<svg style="left:1339px;top:979px" width="14" height="14"><path d="M0 0 V4.5 A3.5 3.5 0 0 0 7 4.5 V0" stroke="#ddd" stroke-width="2" fill="none" transform="translate(6 8) rotate(45) translate(-3.5 -5)"/></svg>
<svg style="left:1358px;top:983px" width="7" height="9"><path d="M0.5 0.5 L6 4.5 L0.5 8.5Z" stroke="#888" fill="none"/></svg>
<div class="btn" style="left:1371px;top:977px;width:32px;height:19px;background:#333"></div>
<div class="a" style="left:1389px;top:978px;width:1px;height:17px;background:#262626"></div>
<svg style="left:1373px;top:980px" width="14" height="14"><path d="M0 7.5 H3 M5.5 7.5 H6.5 M10 7.5 H13" stroke="#ddd" stroke-width="1"/><path d="M4 1 V13 M7.5 4 V10" stroke="#ddd" stroke-width="1"/></svg>
<svg style="left:1393px;top:983px" width="7" height="9"><path d="M0.5 0.5 L6 4.5 L0.5 8.5Z" stroke="#888" fill="none"/></svg>
<svg style="left:1742px;top:980px" width="14" height="14"><circle cx="6" cy="6" r="5" stroke="#ccc" stroke-width="1.2" fill="none"/><path d="M3.5 6 H8.5" stroke="#ccc" stroke-width="1.2"/><path d="M9.5 9.5 L13 13" stroke="#ccc" stroke-width="1.6"/></svg>
<div class="a" style="left:1770px;top:986px width:50px;height:3px"></div>
<div class="a" style="left:1766px;top:985px;width:116px;height:4px;background:#3a3a3a;border-radius:2px"></div>
<div class="a" style="left:1761px;top:981px;width:11px;height:11px;background:#6ec9b0;border-radius:50%"></div>
<div class="a" style="left:1764px;top:984px;width:5px;height:5px;background:#4aa88d;border-radius:50%"></div>
<svg style="left:1887px;top:980px" width="14" height="14"><circle cx="6" cy="6" r="5" stroke="#ccc" stroke-width="1.2" fill="none"/><path d="M3.5 6 H8.5 M6 3.5 V8.5" stroke="#ccc" stroke-width="1.2"/><path d="M9.5 9.5 L13 13" stroke="#ccc" stroke-width="1.6"/></svg>
<div class="a" style="left:494px;top:1004px;width:1420px;height:22px;background:#3c3c3c"></div>
<div class="a" style="left:498px;top:1010px;width:2px;height:2px;background:#888;box-shadow:0 4px #888,0 8px #888"></div>
<div class="btn" style="left:508px;top:1007px;width:16px;height:17px;background:#2f2f2f"></div>
<svg style="left:508px;top:1008px" width="16" height="16"><path d="M1.5 1.5 H13.5 V11 H12 L12 13.5 L9.5 11 H1.5Z" fill="#e8e8e8"/><path d="M3.5 3.8 H5 M6.5 3.8 H11.5 M3.5 6.3 H5 M6.5 6.3 H11.5 M3.5 8.8 H5 M6.5 8.8 H11.5" stroke="#333" stroke-width="1.2"/><path d="M13 15 L15 13 V15Z" fill="#5fc9a8"/></svg>
<div class="a" style="left:528px;top:1008px;width:18px;height:14px;background:#2ecc71;border-radius:2px"></div>
<div class="t" style="left:534px;top:1007px;color:#111;font-size:11px">1</div>
<div class="a" style="left:554px;top:1012px;width:6px;height:6px;background:#2ecc71;border-radius:50%"></div>
<div class="t" style="left:565px;top:1007px;color:#e6e6e6;letter-spacing:-0.25px">Save reminder: 10 minutes since your last save.</div>
<div class="t" style="left:1482px;top:1007px;color:#e6e6e6;font-style:italic;font-size:11px;letter-spacing:-0.2px">Click to see next message</div>
<div class="a" style="left:1610px;top:1006px;width:79px;height:18px;background:#d9bf6e;border-radius:2px"></div>
<div class="t" style="left:1615px;top:1007px;color:#222">Feedback</div>
<div class="a" style="left:1693px;top:1006px;width:108px;height:18px;background:#2ecc71;border-radius:2px"></div>
<div class="t" style="left:1697px;top:1007px;color:#111">Upgrade to Pro</div>
<div class="a" style="left:1805px;top:1006px;width:105px;height:18px;background:#3aa6f0;border-radius:2px"></div>
<div class="t" style="left:1809px;top:1007px;color:#111">Tips and Tricks</div>
<svg style="left:1671px;top:1009px" width="13" height="13"><path d="M0.5 0.5 H7 L10 3.5 V12.5 H0.5Z" fill="#f4f4f4" stroke="#7fd07f" stroke-width="0.8"/><path d="M3 10 L10.5 2.5 L12 4 L4.5 11.5Z" fill="#f07a3a"/></svg>
<svg style="left:1782px;top:1010px" width="14" height="12"><path d="M1 5 Q2 1 4 2 L6 6 V11 H2Z M13 5 Q12 1 10 2 L8 6 V11 H12Z" fill="#f4c430"/></svg>
<svg style="left:1891px;top:1008px" width="14" height="14"><path d="M13 1 Q7 1 4 7 L7 10 Q13 7 13 1Z" fill="#eee"/><circle cx="9" cy="5" r="1.4" fill="#3a7bd5"/><path d="M4 7 L1 8 L3 5Z M7 10 L6 13 L9 11Z" fill="#e04040"/><path d="M4 10 L1 13" stroke="#f0a030" stroke-width="1.5"/></svg></body></html>
